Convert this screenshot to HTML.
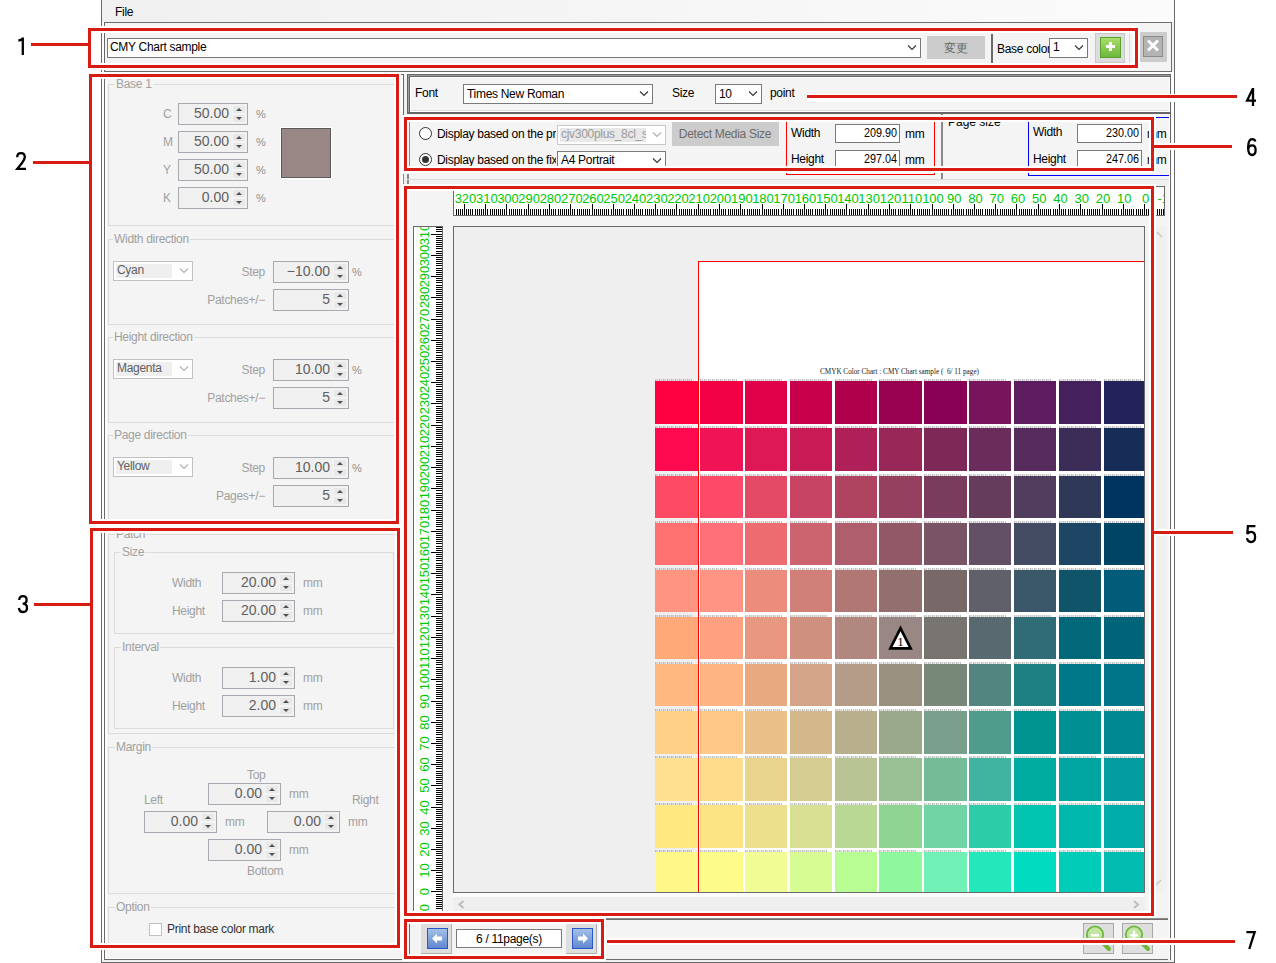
<!DOCTYPE html><html><head><meta charset="utf-8"><style>
html,body{margin:0;padding:0;}
body{width:1276px;height:963px;position:relative;overflow:hidden;background:#fff;font-family:"Liberation Sans", sans-serif;}
body div{position:absolute;box-sizing:content-box;}
</style></head><body>
<div style="left:101px;top:0px;width:1074px;height:963px;background:#f0f0f0"></div>
<div style="left:102px;top:0;width:1072px;height:22px;background:linear-gradient(90deg,#f0f0f0,#fbfbfb);"></div>
<div style="left:115px;top:6.43px;font-size:12px;line-height:12px;color:#000;white-space:nowrap;letter-spacing:-0.3px;">File</div>
<div style="left:101px;top:0px;width:1px;height:963px;background:#6a6a6a"></div>
<div style="left:1174px;top:0px;width:1px;height:963px;background:#6a6a6a"></div>
<div style="left:101px;top:962px;width:1074px;height:1px;background:#6a6a6a"></div>
<div style="left:104px;top:22px;width:1066px;height:48px;border:1px solid #6e6e6e;background:#f4f4f4;"></div>
<div style="left:104px;top:22px;width:1px;height:938px;background:#6a6a6a"></div>
<div style="left:102px;top:22px;width:2px;height:938px;background:#fdfdfd"></div>
<div style="left:105px;top:72px;width:298px;height:887px;background:#fdfdfd"></div>
<div style="left:107px;top:74px;width:294px;height:884px;background:#f4f4f4"></div>
<div style="left:104px;top:959px;width:300px;height:1px;background:#6a6a6a"></div>
<div style="left:108px;top:84px;width:285px;height:140px;border:1px solid #dcdcdc;"></div>
<div style="left:115px;top:77px;padding:0 1px;background:#f4f4f4;font-size:12px;line-height:14px;letter-spacing:-0.3px;color:#a0a0a0;white-space:nowrap;">Base 1</div>
<div style="left:163px;top:108.43px;font-size:12px;line-height:12px;color:#a0a0a0;white-space:nowrap;letter-spacing:-0.3px;">C</div>
<div style="left:178px;top:103px;width:68px;height:20px;border:1px solid #a8a8b0;background:#f0f0f0;"></div>
<div style="left:232px;top:105px;width:12px;height:7px;background:#e8e8e8;border:1px solid #f4f4f4;"></div>
<div style="left:232px;top:114px;width:12px;height:7px;background:#e8e8e8;border:1px solid #f4f4f4;"></div>
<div style="left:236px;top:108px;width:0;height:0;border-left:3px solid transparent;border-right:3px solid transparent;border-bottom:3px solid #505050;"></div>
<div style="left:236px;top:117px;width:0;height:0;border-left:3px solid transparent;border-right:3px solid transparent;border-top:3px solid #505050;"></div>
<div style="left:169px;width:60px;text-align:right;top:106.17px;font-size:14px;line-height:14px;color:#606060;white-space:nowrap;letter-spacing:0px;">50.00</div>
<div style="left:256px;top:108.56px;font-size:11px;line-height:11px;color:#909090;white-space:nowrap;letter-spacing:0px;">%</div>
<div style="left:163px;top:136.43px;font-size:12px;line-height:12px;color:#a0a0a0;white-space:nowrap;letter-spacing:-0.3px;">M</div>
<div style="left:178px;top:131px;width:68px;height:20px;border:1px solid #a8a8b0;background:#f0f0f0;"></div>
<div style="left:232px;top:133px;width:12px;height:7px;background:#e8e8e8;border:1px solid #f4f4f4;"></div>
<div style="left:232px;top:142px;width:12px;height:7px;background:#e8e8e8;border:1px solid #f4f4f4;"></div>
<div style="left:236px;top:136px;width:0;height:0;border-left:3px solid transparent;border-right:3px solid transparent;border-bottom:3px solid #505050;"></div>
<div style="left:236px;top:145px;width:0;height:0;border-left:3px solid transparent;border-right:3px solid transparent;border-top:3px solid #505050;"></div>
<div style="left:169px;width:60px;text-align:right;top:134.17px;font-size:14px;line-height:14px;color:#606060;white-space:nowrap;letter-spacing:0px;">50.00</div>
<div style="left:256px;top:136.56px;font-size:11px;line-height:11px;color:#909090;white-space:nowrap;letter-spacing:0px;">%</div>
<div style="left:163px;top:164.43px;font-size:12px;line-height:12px;color:#a0a0a0;white-space:nowrap;letter-spacing:-0.3px;">Y</div>
<div style="left:178px;top:159px;width:68px;height:20px;border:1px solid #a8a8b0;background:#f0f0f0;"></div>
<div style="left:232px;top:161px;width:12px;height:7px;background:#e8e8e8;border:1px solid #f4f4f4;"></div>
<div style="left:232px;top:170px;width:12px;height:7px;background:#e8e8e8;border:1px solid #f4f4f4;"></div>
<div style="left:236px;top:164px;width:0;height:0;border-left:3px solid transparent;border-right:3px solid transparent;border-bottom:3px solid #505050;"></div>
<div style="left:236px;top:173px;width:0;height:0;border-left:3px solid transparent;border-right:3px solid transparent;border-top:3px solid #505050;"></div>
<div style="left:169px;width:60px;text-align:right;top:162.17px;font-size:14px;line-height:14px;color:#606060;white-space:nowrap;letter-spacing:0px;">50.00</div>
<div style="left:256px;top:164.56px;font-size:11px;line-height:11px;color:#909090;white-space:nowrap;letter-spacing:0px;">%</div>
<div style="left:163px;top:192.43px;font-size:12px;line-height:12px;color:#a0a0a0;white-space:nowrap;letter-spacing:-0.3px;">K</div>
<div style="left:178px;top:187px;width:68px;height:20px;border:1px solid #a8a8b0;background:#f0f0f0;"></div>
<div style="left:232px;top:189px;width:12px;height:7px;background:#e8e8e8;border:1px solid #f4f4f4;"></div>
<div style="left:232px;top:198px;width:12px;height:7px;background:#e8e8e8;border:1px solid #f4f4f4;"></div>
<div style="left:236px;top:192px;width:0;height:0;border-left:3px solid transparent;border-right:3px solid transparent;border-bottom:3px solid #505050;"></div>
<div style="left:236px;top:201px;width:0;height:0;border-left:3px solid transparent;border-right:3px solid transparent;border-top:3px solid #505050;"></div>
<div style="left:169px;width:60px;text-align:right;top:190.17px;font-size:14px;line-height:14px;color:#606060;white-space:nowrap;letter-spacing:0px;">0.00</div>
<div style="left:256px;top:192.56px;font-size:11px;line-height:11px;color:#909090;white-space:nowrap;letter-spacing:0px;">%</div>
<div style="left:281px;top:128px;width:48px;height:48px;border:1px solid #5a5a5a;background:#988784;box-shadow:0 0 0 1px #fff;"></div>
<div style="left:108px;top:239px;width:285px;height:84px;border:1px solid #dcdcdc;"></div>
<div style="left:113px;top:232px;padding:0 1px;background:#f4f4f4;font-size:12px;line-height:14px;letter-spacing:-0.3px;color:#a0a0a0;white-space:nowrap;">Width direction</div>
<div style="left:113px;top:261px;width:78px;height:18px;border:1px solid #c0c0c0;background:#fff;"></div>
<div style="left:116px;top:264px;width:56px;height:14px;background:#efefef"></div>
<div style="left:117px;top:264.43px;font-size:12px;line-height:12px;color:#606060;white-space:nowrap;letter-spacing:-0.3px;">Cyan</div>
<svg style="position:absolute;left:179px;top:268.0px" width="10" height="6" viewBox="0 0 10 6"><path d="M1 0.5 L5 4.5 L9 0.5" fill="none" stroke="#b0b0b0" stroke-width="1.1"/></svg>
<div style="left:205px;width:60px;text-align:right;top:266.43px;font-size:12px;line-height:12px;color:#a0a0a0;white-space:nowrap;letter-spacing:-0.3px;">Step</div>
<div style="left:273px;top:261px;width:74px;height:20px;border:1px solid #a8a8b0;background:#f0f0f0;"></div>
<div style="left:333px;top:263px;width:12px;height:7px;background:#e8e8e8;border:1px solid #f4f4f4;"></div>
<div style="left:333px;top:272px;width:12px;height:7px;background:#e8e8e8;border:1px solid #f4f4f4;"></div>
<div style="left:337px;top:266px;width:0;height:0;border-left:3px solid transparent;border-right:3px solid transparent;border-bottom:3px solid #505050;"></div>
<div style="left:337px;top:275px;width:0;height:0;border-left:3px solid transparent;border-right:3px solid transparent;border-top:3px solid #505050;"></div>
<div style="left:270px;width:60px;text-align:right;top:264.17px;font-size:14px;line-height:14px;color:#606060;white-space:nowrap;letter-spacing:0px;">&minus;10.00</div>
<div style="left:352px;top:266.56px;font-size:11px;line-height:11px;color:#909090;white-space:nowrap;letter-spacing:0px;">%</div>
<div style="left:185px;width:80px;text-align:right;top:294.43px;font-size:12px;line-height:12px;color:#a0a0a0;white-space:nowrap;letter-spacing:-0.3px;">Patches+/&minus;</div>
<div style="left:273px;top:289px;width:74px;height:20px;border:1px solid #a8a8b0;background:#f0f0f0;"></div>
<div style="left:333px;top:291px;width:12px;height:7px;background:#e8e8e8;border:1px solid #f4f4f4;"></div>
<div style="left:333px;top:300px;width:12px;height:7px;background:#e8e8e8;border:1px solid #f4f4f4;"></div>
<div style="left:337px;top:294px;width:0;height:0;border-left:3px solid transparent;border-right:3px solid transparent;border-bottom:3px solid #505050;"></div>
<div style="left:337px;top:303px;width:0;height:0;border-left:3px solid transparent;border-right:3px solid transparent;border-top:3px solid #505050;"></div>
<div style="left:270px;width:60px;text-align:right;top:292.17px;font-size:14px;line-height:14px;color:#606060;white-space:nowrap;letter-spacing:0px;">5</div>
<div style="left:108px;top:337px;width:285px;height:84px;border:1px solid #dcdcdc;"></div>
<div style="left:113px;top:330px;padding:0 1px;background:#f4f4f4;font-size:12px;line-height:14px;letter-spacing:-0.3px;color:#a0a0a0;white-space:nowrap;">Height direction</div>
<div style="left:113px;top:359px;width:78px;height:18px;border:1px solid #c0c0c0;background:#fff;"></div>
<div style="left:116px;top:362px;width:56px;height:14px;background:#efefef"></div>
<div style="left:117px;top:362.43px;font-size:12px;line-height:12px;color:#606060;white-space:nowrap;letter-spacing:-0.3px;">Magenta</div>
<svg style="position:absolute;left:179px;top:366.0px" width="10" height="6" viewBox="0 0 10 6"><path d="M1 0.5 L5 4.5 L9 0.5" fill="none" stroke="#b0b0b0" stroke-width="1.1"/></svg>
<div style="left:205px;width:60px;text-align:right;top:364.43px;font-size:12px;line-height:12px;color:#a0a0a0;white-space:nowrap;letter-spacing:-0.3px;">Step</div>
<div style="left:273px;top:359px;width:74px;height:20px;border:1px solid #a8a8b0;background:#f0f0f0;"></div>
<div style="left:333px;top:361px;width:12px;height:7px;background:#e8e8e8;border:1px solid #f4f4f4;"></div>
<div style="left:333px;top:370px;width:12px;height:7px;background:#e8e8e8;border:1px solid #f4f4f4;"></div>
<div style="left:337px;top:364px;width:0;height:0;border-left:3px solid transparent;border-right:3px solid transparent;border-bottom:3px solid #505050;"></div>
<div style="left:337px;top:373px;width:0;height:0;border-left:3px solid transparent;border-right:3px solid transparent;border-top:3px solid #505050;"></div>
<div style="left:270px;width:60px;text-align:right;top:362.17px;font-size:14px;line-height:14px;color:#606060;white-space:nowrap;letter-spacing:0px;">10.00</div>
<div style="left:352px;top:364.56px;font-size:11px;line-height:11px;color:#909090;white-space:nowrap;letter-spacing:0px;">%</div>
<div style="left:185px;width:80px;text-align:right;top:392.43px;font-size:12px;line-height:12px;color:#a0a0a0;white-space:nowrap;letter-spacing:-0.3px;">Patches+/&minus;</div>
<div style="left:273px;top:387px;width:74px;height:20px;border:1px solid #a8a8b0;background:#f0f0f0;"></div>
<div style="left:333px;top:389px;width:12px;height:7px;background:#e8e8e8;border:1px solid #f4f4f4;"></div>
<div style="left:333px;top:398px;width:12px;height:7px;background:#e8e8e8;border:1px solid #f4f4f4;"></div>
<div style="left:337px;top:392px;width:0;height:0;border-left:3px solid transparent;border-right:3px solid transparent;border-bottom:3px solid #505050;"></div>
<div style="left:337px;top:401px;width:0;height:0;border-left:3px solid transparent;border-right:3px solid transparent;border-top:3px solid #505050;"></div>
<div style="left:270px;width:60px;text-align:right;top:390.17px;font-size:14px;line-height:14px;color:#606060;white-space:nowrap;letter-spacing:0px;">5</div>
<div style="left:108px;top:435px;width:285px;height:84px;border:1px solid #dcdcdc;"></div>
<div style="left:113px;top:428px;padding:0 1px;background:#f4f4f4;font-size:12px;line-height:14px;letter-spacing:-0.3px;color:#a0a0a0;white-space:nowrap;">Page direction</div>
<div style="left:113px;top:457px;width:78px;height:18px;border:1px solid #c0c0c0;background:#fff;"></div>
<div style="left:116px;top:460px;width:56px;height:14px;background:#efefef"></div>
<div style="left:117px;top:460.43px;font-size:12px;line-height:12px;color:#606060;white-space:nowrap;letter-spacing:-0.3px;">Yellow</div>
<svg style="position:absolute;left:179px;top:464.0px" width="10" height="6" viewBox="0 0 10 6"><path d="M1 0.5 L5 4.5 L9 0.5" fill="none" stroke="#b0b0b0" stroke-width="1.1"/></svg>
<div style="left:205px;width:60px;text-align:right;top:462.43px;font-size:12px;line-height:12px;color:#a0a0a0;white-space:nowrap;letter-spacing:-0.3px;">Step</div>
<div style="left:273px;top:457px;width:74px;height:20px;border:1px solid #a8a8b0;background:#f0f0f0;"></div>
<div style="left:333px;top:459px;width:12px;height:7px;background:#e8e8e8;border:1px solid #f4f4f4;"></div>
<div style="left:333px;top:468px;width:12px;height:7px;background:#e8e8e8;border:1px solid #f4f4f4;"></div>
<div style="left:337px;top:462px;width:0;height:0;border-left:3px solid transparent;border-right:3px solid transparent;border-bottom:3px solid #505050;"></div>
<div style="left:337px;top:471px;width:0;height:0;border-left:3px solid transparent;border-right:3px solid transparent;border-top:3px solid #505050;"></div>
<div style="left:270px;width:60px;text-align:right;top:460.17px;font-size:14px;line-height:14px;color:#606060;white-space:nowrap;letter-spacing:0px;">10.00</div>
<div style="left:352px;top:462.56px;font-size:11px;line-height:11px;color:#909090;white-space:nowrap;letter-spacing:0px;">%</div>
<div style="left:185px;width:80px;text-align:right;top:490.43px;font-size:12px;line-height:12px;color:#a0a0a0;white-space:nowrap;letter-spacing:-0.3px;">Pages+/&minus;</div>
<div style="left:273px;top:485px;width:74px;height:20px;border:1px solid #a8a8b0;background:#f0f0f0;"></div>
<div style="left:333px;top:487px;width:12px;height:7px;background:#e8e8e8;border:1px solid #f4f4f4;"></div>
<div style="left:333px;top:496px;width:12px;height:7px;background:#e8e8e8;border:1px solid #f4f4f4;"></div>
<div style="left:337px;top:490px;width:0;height:0;border-left:3px solid transparent;border-right:3px solid transparent;border-bottom:3px solid #505050;"></div>
<div style="left:337px;top:499px;width:0;height:0;border-left:3px solid transparent;border-right:3px solid transparent;border-top:3px solid #505050;"></div>
<div style="left:270px;width:60px;text-align:right;top:488.17px;font-size:14px;line-height:14px;color:#606060;white-space:nowrap;letter-spacing:0px;">5</div>
<div style="left:108px;top:534px;width:286px;height:198px;border:1px solid #dcdcdc;"></div>
<div style="left:115px;top:527px;padding:0 1px;background:#f4f4f4;font-size:12px;line-height:14px;letter-spacing:-0.3px;color:#a0a0a0;white-space:nowrap;">Patch</div>
<div style="left:114px;top:552px;width:278px;height:80px;border:1px solid #dcdcdc;"></div>
<div style="left:121px;top:545px;padding:0 1px;background:#f4f4f4;font-size:12px;line-height:14px;letter-spacing:-0.3px;color:#a0a0a0;white-space:nowrap;">Size</div>
<div style="left:172px;top:577.43px;font-size:12px;line-height:12px;color:#a0a0a0;white-space:nowrap;letter-spacing:-0.3px;">Width</div>
<div style="left:222px;top:572px;width:71px;height:20px;border:1px solid #a8a8b0;background:#f0f0f0;"></div>
<div style="left:279px;top:574px;width:12px;height:7px;background:#e8e8e8;border:1px solid #f4f4f4;"></div>
<div style="left:279px;top:583px;width:12px;height:7px;background:#e8e8e8;border:1px solid #f4f4f4;"></div>
<div style="left:283px;top:577px;width:0;height:0;border-left:3px solid transparent;border-right:3px solid transparent;border-bottom:3px solid #505050;"></div>
<div style="left:283px;top:586px;width:0;height:0;border-left:3px solid transparent;border-right:3px solid transparent;border-top:3px solid #505050;"></div>
<div style="left:216px;width:60px;text-align:right;top:575.17px;font-size:14px;line-height:14px;color:#606060;white-space:nowrap;letter-spacing:0px;">20.00</div>
<div style="left:303px;top:577.43px;font-size:12px;line-height:12px;color:#a0a0a0;white-space:nowrap;letter-spacing:-0.3px;">mm</div>
<div style="left:172px;top:605.43px;font-size:12px;line-height:12px;color:#a0a0a0;white-space:nowrap;letter-spacing:-0.3px;">Height</div>
<div style="left:222px;top:600px;width:71px;height:20px;border:1px solid #a8a8b0;background:#f0f0f0;"></div>
<div style="left:279px;top:602px;width:12px;height:7px;background:#e8e8e8;border:1px solid #f4f4f4;"></div>
<div style="left:279px;top:611px;width:12px;height:7px;background:#e8e8e8;border:1px solid #f4f4f4;"></div>
<div style="left:283px;top:605px;width:0;height:0;border-left:3px solid transparent;border-right:3px solid transparent;border-bottom:3px solid #505050;"></div>
<div style="left:283px;top:614px;width:0;height:0;border-left:3px solid transparent;border-right:3px solid transparent;border-top:3px solid #505050;"></div>
<div style="left:216px;width:60px;text-align:right;top:603.17px;font-size:14px;line-height:14px;color:#606060;white-space:nowrap;letter-spacing:0px;">20.00</div>
<div style="left:303px;top:605.43px;font-size:12px;line-height:12px;color:#a0a0a0;white-space:nowrap;letter-spacing:-0.3px;">mm</div>
<div style="left:114px;top:647px;width:278px;height:80px;border:1px solid #dcdcdc;"></div>
<div style="left:121px;top:640px;padding:0 1px;background:#f4f4f4;font-size:12px;line-height:14px;letter-spacing:-0.3px;color:#a0a0a0;white-space:nowrap;">Interval</div>
<div style="left:172px;top:672.43px;font-size:12px;line-height:12px;color:#a0a0a0;white-space:nowrap;letter-spacing:-0.3px;">Width</div>
<div style="left:222px;top:667px;width:71px;height:20px;border:1px solid #a8a8b0;background:#f0f0f0;"></div>
<div style="left:279px;top:669px;width:12px;height:7px;background:#e8e8e8;border:1px solid #f4f4f4;"></div>
<div style="left:279px;top:678px;width:12px;height:7px;background:#e8e8e8;border:1px solid #f4f4f4;"></div>
<div style="left:283px;top:672px;width:0;height:0;border-left:3px solid transparent;border-right:3px solid transparent;border-bottom:3px solid #505050;"></div>
<div style="left:283px;top:681px;width:0;height:0;border-left:3px solid transparent;border-right:3px solid transparent;border-top:3px solid #505050;"></div>
<div style="left:216px;width:60px;text-align:right;top:670.17px;font-size:14px;line-height:14px;color:#606060;white-space:nowrap;letter-spacing:0px;">1.00</div>
<div style="left:303px;top:672.43px;font-size:12px;line-height:12px;color:#a0a0a0;white-space:nowrap;letter-spacing:-0.3px;">mm</div>
<div style="left:172px;top:700.43px;font-size:12px;line-height:12px;color:#a0a0a0;white-space:nowrap;letter-spacing:-0.3px;">Height</div>
<div style="left:222px;top:695px;width:71px;height:20px;border:1px solid #a8a8b0;background:#f0f0f0;"></div>
<div style="left:279px;top:697px;width:12px;height:7px;background:#e8e8e8;border:1px solid #f4f4f4;"></div>
<div style="left:279px;top:706px;width:12px;height:7px;background:#e8e8e8;border:1px solid #f4f4f4;"></div>
<div style="left:283px;top:700px;width:0;height:0;border-left:3px solid transparent;border-right:3px solid transparent;border-bottom:3px solid #505050;"></div>
<div style="left:283px;top:709px;width:0;height:0;border-left:3px solid transparent;border-right:3px solid transparent;border-top:3px solid #505050;"></div>
<div style="left:216px;width:60px;text-align:right;top:698.17px;font-size:14px;line-height:14px;color:#606060;white-space:nowrap;letter-spacing:0px;">2.00</div>
<div style="left:303px;top:700.43px;font-size:12px;line-height:12px;color:#a0a0a0;white-space:nowrap;letter-spacing:-0.3px;">mm</div>
<div style="left:108px;top:747px;width:286px;height:145px;border:1px solid #dcdcdc;"></div>
<div style="left:115px;top:740px;padding:0 1px;background:#f4f4f4;font-size:12px;line-height:14px;letter-spacing:-0.3px;color:#a0a0a0;white-space:nowrap;">Margin</div>
<div style="left:247px;top:769.43px;font-size:12px;line-height:12px;color:#a0a0a0;white-space:nowrap;letter-spacing:-0.3px;">Top</div>
<div style="left:208px;top:783px;width:71px;height:20px;border:1px solid #a8a8b0;background:#f0f0f0;"></div>
<div style="left:265px;top:785px;width:12px;height:7px;background:#e8e8e8;border:1px solid #f4f4f4;"></div>
<div style="left:265px;top:794px;width:12px;height:7px;background:#e8e8e8;border:1px solid #f4f4f4;"></div>
<div style="left:269px;top:788px;width:0;height:0;border-left:3px solid transparent;border-right:3px solid transparent;border-bottom:3px solid #505050;"></div>
<div style="left:269px;top:797px;width:0;height:0;border-left:3px solid transparent;border-right:3px solid transparent;border-top:3px solid #505050;"></div>
<div style="left:202px;width:60px;text-align:right;top:786.17px;font-size:14px;line-height:14px;color:#606060;white-space:nowrap;letter-spacing:0px;">0.00</div>
<div style="left:289px;top:788.43px;font-size:12px;line-height:12px;color:#a0a0a0;white-space:nowrap;letter-spacing:-0.3px;">mm</div>
<div style="left:144px;top:794.43px;font-size:12px;line-height:12px;color:#a0a0a0;white-space:nowrap;letter-spacing:-0.3px;">Left</div>
<div style="left:352px;top:794.43px;font-size:12px;line-height:12px;color:#a0a0a0;white-space:nowrap;letter-spacing:-0.3px;">Right</div>
<div style="left:144px;top:811px;width:71px;height:20px;border:1px solid #a8a8b0;background:#f0f0f0;"></div>
<div style="left:201px;top:813px;width:12px;height:7px;background:#e8e8e8;border:1px solid #f4f4f4;"></div>
<div style="left:201px;top:822px;width:12px;height:7px;background:#e8e8e8;border:1px solid #f4f4f4;"></div>
<div style="left:205px;top:816px;width:0;height:0;border-left:3px solid transparent;border-right:3px solid transparent;border-bottom:3px solid #505050;"></div>
<div style="left:205px;top:825px;width:0;height:0;border-left:3px solid transparent;border-right:3px solid transparent;border-top:3px solid #505050;"></div>
<div style="left:138px;width:60px;text-align:right;top:814.17px;font-size:14px;line-height:14px;color:#606060;white-space:nowrap;letter-spacing:0px;">0.00</div>
<div style="left:225px;top:816.43px;font-size:12px;line-height:12px;color:#a0a0a0;white-space:nowrap;letter-spacing:-0.3px;">mm</div>
<div style="left:267px;top:811px;width:71px;height:20px;border:1px solid #a8a8b0;background:#f0f0f0;"></div>
<div style="left:324px;top:813px;width:12px;height:7px;background:#e8e8e8;border:1px solid #f4f4f4;"></div>
<div style="left:324px;top:822px;width:12px;height:7px;background:#e8e8e8;border:1px solid #f4f4f4;"></div>
<div style="left:328px;top:816px;width:0;height:0;border-left:3px solid transparent;border-right:3px solid transparent;border-bottom:3px solid #505050;"></div>
<div style="left:328px;top:825px;width:0;height:0;border-left:3px solid transparent;border-right:3px solid transparent;border-top:3px solid #505050;"></div>
<div style="left:261px;width:60px;text-align:right;top:814.17px;font-size:14px;line-height:14px;color:#606060;white-space:nowrap;letter-spacing:0px;">0.00</div>
<div style="left:348px;top:816.43px;font-size:12px;line-height:12px;color:#a0a0a0;white-space:nowrap;letter-spacing:-0.3px;">mm</div>
<div style="left:208px;top:839px;width:71px;height:20px;border:1px solid #a8a8b0;background:#f0f0f0;"></div>
<div style="left:265px;top:841px;width:12px;height:7px;background:#e8e8e8;border:1px solid #f4f4f4;"></div>
<div style="left:265px;top:850px;width:12px;height:7px;background:#e8e8e8;border:1px solid #f4f4f4;"></div>
<div style="left:269px;top:844px;width:0;height:0;border-left:3px solid transparent;border-right:3px solid transparent;border-bottom:3px solid #505050;"></div>
<div style="left:269px;top:853px;width:0;height:0;border-left:3px solid transparent;border-right:3px solid transparent;border-top:3px solid #505050;"></div>
<div style="left:202px;width:60px;text-align:right;top:842.17px;font-size:14px;line-height:14px;color:#606060;white-space:nowrap;letter-spacing:0px;">0.00</div>
<div style="left:289px;top:844.43px;font-size:12px;line-height:12px;color:#a0a0a0;white-space:nowrap;letter-spacing:-0.3px;">mm</div>
<div style="left:247px;top:865.43px;font-size:12px;line-height:12px;color:#a0a0a0;white-space:nowrap;letter-spacing:-0.3px;">Bottom</div>
<div style="left:108px;top:907px;width:286px;height:38px;border:1px solid #dcdcdc;"></div>
<div style="left:115px;top:900px;padding:0 1px;background:#f4f4f4;font-size:12px;line-height:14px;letter-spacing:-0.3px;color:#a0a0a0;white-space:nowrap;">Option</div>
<div style="left:149px;top:923px;width:11px;height:11px;border:1px solid #c0c0c0;background:#fff;"></div>
<div style="left:167px;top:923.43px;font-size:12px;line-height:12px;color:#333;white-space:nowrap;letter-spacing:-0.3px;">Print base color mark</div>
<div style="left:107px;top:38px;width:812px;height:18px;border:1px solid #7a7a7a;background:#fff;"></div>
<div style="left:110px;top:41.43px;font-size:12px;line-height:12px;color:#000;white-space:nowrap;letter-spacing:-0.3px;">CMY Chart sample</div>
<svg style="position:absolute;left:907px;top:45.0px" width="10" height="6" viewBox="0 0 10 6"><path d="M1 0.5 L5 4.5 L9 0.5" fill="none" stroke="#333" stroke-width="1.1"/></svg>
<div style="left:927px;top:36px;width:58px;height:23px;background:#cccccc;"></div>
<div style="left:927.0px;width:58px;text-align:center;top:41.93px;font-size:12px;line-height:12px;color:#6a6a6a;white-space:nowrap;letter-spacing:0.5px;">変更</div>
<div style="left:991px;top:34px;width:2px;height:29px;background:#6a6a6a"></div>
<div style="left:997px;top:43.43px;font-size:12px;line-height:12px;color:#000;white-space:nowrap;letter-spacing:-0.3px;">Base color</div>
<div style="left:1049px;top:38px;width:37px;height:18px;border:1px solid #7a7a7a;background:#fff;"></div>
<div style="left:1053px;top:41.43px;font-size:12px;line-height:12px;color:#000;white-space:nowrap;letter-spacing:-0.3px;">1</div>
<svg style="position:absolute;left:1074px;top:45.0px" width="10" height="6" viewBox="0 0 10 6"><path d="M1 0.5 L5 4.5 L9 0.5" fill="none" stroke="#333" stroke-width="1.1"/></svg>
<div style="left:1095px;top:33px;width:28px;height:28px;border:1px solid #c8c8c8;background:#dcdcdc;"></div>
<div style="left:1100px;top:37px;width:19px;height:19px;border:1px solid #5aa02c;background:linear-gradient(#a8dc6c,#6cb83c);"></div>
<div style="left:1106px;top:45px;width:9px;height:3px;background:#fff"></div>
<div style="left:1109px;top:42px;width:3px;height:9px;background:#fff"></div>
<div style="left:1129px;top:34px;width:1px;height:28px;background:#d8d8d8"></div>
<div style="left:1140px;top:32px;width:27px;height:30px;background:#cccccc;"></div>
<div style="left:1143px;top:36px;width:18px;height:19px;border:1px solid #8c8c8c;background:#b4b4b4;"></div>
<div style="left:1146px;top:44px;width:14px;height:3px;background:#fff;transform:rotate(45deg);"></div>
<div style="left:1146px;top:44px;width:14px;height:3px;background:#fff;transform:rotate(-45deg);"></div>
<div style="left:403px;top:74px;width:1px;height:41px;background:#666"></div>
<div style="left:407px;top:74px;width:762px;height:37px;border:1px solid #666;border-bottom-width:2px;background:#f4f4f4;box-shadow:inset 1px 1px 0 #a0a0a0, inset 2px 2px 0 #666, inset 3px 3px 0 #fff, inset -1px -1px 0 #fff;"></div>
<div style="left:410px;top:110px;width:759px;height:1px;background:#e0e0e0"></div>
<div style="left:401px;top:74px;width:3px;height:1px;background:#666"></div>
<div style="left:415px;top:87.43px;font-size:12px;line-height:12px;color:#000;white-space:nowrap;letter-spacing:-0.3px;">Font</div>
<div style="left:463px;top:84px;width:188px;height:18px;border:1px solid #7a7a7a;background:#fff;"></div>
<div style="left:467px;top:88.43px;font-size:12px;line-height:12px;color:#000;white-space:nowrap;letter-spacing:-0.3px;">Times New Roman</div>
<svg style="position:absolute;left:639px;top:91.0px" width="10" height="6" viewBox="0 0 10 6"><path d="M1 0.5 L5 4.5 L9 0.5" fill="none" stroke="#333" stroke-width="1.1"/></svg>
<div style="left:672px;top:87.43px;font-size:12px;line-height:12px;color:#000;white-space:nowrap;letter-spacing:-0.3px;">Size</div>
<div style="left:715px;top:84px;width:45px;height:18px;border:1px solid #7a7a7a;background:#fff;"></div>
<div style="left:719px;top:88.43px;font-size:12px;line-height:12px;color:#000;white-space:nowrap;letter-spacing:-0.3px;">10</div>
<svg style="position:absolute;left:748px;top:91.0px" width="10" height="6" viewBox="0 0 10 6"><path d="M1 0.5 L5 4.5 L9 0.5" fill="none" stroke="#333" stroke-width="1.1"/></svg>
<div style="left:770px;top:87.43px;font-size:12px;line-height:12px;color:#000;white-space:nowrap;letter-spacing:-0.3px;">point</div>
<div style="left:407px;top:114px;width:763px;height:66px;background:#f4f4f4"></div>
<div style="left:409px;top:122px;width:1px;height:45px;background:#8a8a8a"></div>
<div style="left:419px;top:127px;width:11px;height:11px;border:1px solid #333;border-radius:50%;background:#fff;"></div>
<div style="left:419px;top:153px;width:11px;height:11px;border:1px solid #333;border-radius:50%;background:#fff;"></div>
<div style="left:422px;top:156px;width:7px;height:7px;border-radius:50%;background:#333;"></div>
<div style="left:437px;top:126px;width:119px;height:16px;overflow:hidden;"><div style="left:0;top:0.4px;font-size:12px;line-height:16px;letter-spacing:-0.3px;white-space:nowrap;color:#000;position:absolute;">Display based on the printer</div></div>
<div style="left:437px;top:152px;width:119px;height:16px;overflow:hidden;"><div style="left:0;top:0.4px;font-size:12px;line-height:16px;letter-spacing:-0.3px;white-space:nowrap;color:#000;position:absolute;">Display based on the fixed size</div></div>
<div style="left:557px;top:125px;width:107px;height:18px;border:1px solid #c8c8c8;background:#fff;"></div>
<div style="left:560px;top:128px;width:86px;height:14px;background:#e8e8e8"></div>
<div style="left:558px;top:126px;width:88px;height:18px;overflow:hidden;"><div style="left:3px;top:2.43px;font-size:12px;line-height:12px;letter-spacing:-0.3px;color:#9a9a9a;white-space:nowrap;">cjv300plus_8cl_ss</div></div>
<svg style="position:absolute;left:652px;top:132.0px" width="10" height="6" viewBox="0 0 10 6"><path d="M1 0.5 L5 4.5 L9 0.5" fill="none" stroke="#b0b0b0" stroke-width="1.1"/></svg>
<div style="left:557px;top:151px;width:107px;height:18px;border:1px solid #7a7a7a;background:#fff;"></div>
<div style="left:561px;top:154.43px;font-size:12px;line-height:12px;color:#000;white-space:nowrap;letter-spacing:-0.3px;">A4 Portrait</div>
<svg style="position:absolute;left:652px;top:158.0px" width="10" height="6" viewBox="0 0 10 6"><path d="M1 0.5 L5 4.5 L9 0.5" fill="none" stroke="#333" stroke-width="1.1"/></svg>
<div style="left:672px;top:122px;width:107px;height:24px;background:#cccccc;"></div>
<div style="left:671.5px;width:107px;text-align:center;top:128.43px;font-size:12px;line-height:12px;color:#6a6a6a;white-space:nowrap;letter-spacing:-0.3px;">Detect Media Size</div>
<div style="left:786px;top:122px;width:147px;height:52px;border:1px solid #ff0000;border-top:0;"></div>
<div style="left:791px;top:127.43px;font-size:12px;line-height:12px;color:#000;white-space:nowrap;letter-spacing:-0.3px;">Width</div>
<div style="left:835px;top:124px;width:63px;height:17px;border:1px solid #7a7a7a;background:#fff;"></div>
<div style="left:837px;width:60px;text-align:right;top:127.43px;font-size:12px;line-height:12px;color:#000;white-space:nowrap;letter-spacing:0px;transform:scaleX(.9);transform-origin:100% 50%;">209.90</div>
<div style="left:905px;top:128.43px;font-size:12px;line-height:12px;color:#000;white-space:nowrap;letter-spacing:-0.3px;">mm</div>
<div style="left:791px;top:153.43px;font-size:12px;line-height:12px;color:#000;white-space:nowrap;letter-spacing:-0.3px;">Height</div>
<div style="left:835px;top:150px;width:63px;height:17px;border:1px solid #7a7a7a;background:#fff;"></div>
<div style="left:837px;width:60px;text-align:right;top:153.43px;font-size:12px;line-height:12px;color:#000;white-space:nowrap;letter-spacing:0px;transform:scaleX(.9);transform-origin:100% 50%;">297.04</div>
<div style="left:905px;top:154.43px;font-size:12px;line-height:12px;color:#000;white-space:nowrap;letter-spacing:-0.3px;">mm</div>
<div style="left:941px;top:114px;width:2px;height:66px;background:#8a8a8a"></div>
<div style="left:948px;top:121px;width:60px;height:10px;overflow:hidden;"><div style="position:absolute;left:0;top:-5px;font-size:12px;line-height:12px;color:#000;">Page size</div></div>
<div style="left:1028px;top:117px;width:142px;height:57px;border:1px solid #0000ff;border-right:0;"></div>
<div style="left:1033px;top:126.43px;font-size:12px;line-height:12px;color:#000;white-space:nowrap;letter-spacing:-0.3px;">Width</div>
<div style="left:1077px;top:124px;width:63px;height:17px;border:1px solid #7a7a7a;background:#fff;"></div>
<div style="left:1079px;width:60px;text-align:right;top:127.43px;font-size:12px;line-height:12px;color:#000;white-space:nowrap;letter-spacing:0px;transform:scaleX(.9);transform-origin:100% 50%;">230.00</div>
<div style="left:1147px;top:128.43px;font-size:12px;line-height:12px;color:#000;white-space:nowrap;letter-spacing:-0.3px;">mm</div>
<div style="left:1033px;top:153.43px;font-size:12px;line-height:12px;color:#000;white-space:nowrap;letter-spacing:-0.3px;">Height</div>
<div style="left:1077px;top:150px;width:63px;height:17px;border:1px solid #7a7a7a;background:#fff;"></div>
<div style="left:1079px;width:60px;text-align:right;top:153.43px;font-size:12px;line-height:12px;color:#000;white-space:nowrap;letter-spacing:0px;transform:scaleX(.9);transform-origin:100% 50%;">247.06</div>
<div style="left:1147px;top:154.43px;font-size:12px;line-height:12px;color:#000;white-space:nowrap;letter-spacing:-0.3px;">mm</div>
<div style="left:403px;top:174px;width:1px;height:10px;background:#8a8a8a"></div>
<div style="left:407px;top:174px;width:2px;height:10px;background:#8a8a8a"></div>
<div style="left:407px;top:179px;width:763px;height:1px;background:#dcdcdc"></div>
<div style="left:407px;top:186px;width:762px;height:730px;background:#f4f4f4"></div>
<div style="left:453px;top:186px;width:710px;height:28px;border-left:1px solid #6a6a6a;border-top:1px solid #6a6a6a;border-right:1px solid #6a6a6a;border-bottom:1px solid #6a6a6a;background:#fff;"></div>
<div style="left:413px;top:226px;width:28px;height:685px;border-left:1px solid #6a6a6a;border-top:1px solid #6a6a6a;border-right:1px solid #6a6a6a;background:#fff;"></div>
<div style="left:453px;top:226px;width:690px;height:665px;border:1px solid #6a6a6a;background:#efefef;overflow:hidden;" id="pg"></div>
<div style="left:453px;top:893px;width:692px;height:4px;background:#fbfbfb"></div>
<div style="left:453px;top:897px;width:692px;height:14px;background:#efefef"></div>
<div style="left:1156px;top:226px;width:10px;height:665px;background:#f0f0f0"></div>
<div style="left:407px;top:919px;width:763px;height:40px;background:#f4f4f4"></div>
<div style="left:606px;top:918px;width:562px;height:1px;background:#8a8a8a"></div>
<div style="left:606px;top:919px;width:562px;height:1px;background:#6e6e6e"></div>
<div style="left:606px;top:959px;width:562px;height:1px;background:#6e6e6e"></div>
<div style="left:409px;top:924px;width:1px;height:30px;background:#6a6a6a"></div>
<div style="left:421px;top:924px;width:30px;height:29px;background:#dedede;border-right:1px solid #b0b0b0;border-bottom:1px solid #b0b0b0;"></div>
<div style="left:427px;top:928px;width:19px;height:19px;border:1px solid #2a58c8;background:linear-gradient(#a4c0e8,#6088d0);"></div>
<svg style="position:absolute;left:427px;top:928px" width="21" height="21" viewBox="0 0 21 21"><path d="M5 10.5 L10 5.5 L10 8.5 L15 8.5 L15 12.5 L10 12.5 L10 15.5 Z" fill="#fff"/></svg>
<div style="left:456px;top:929px;width:104px;height:17px;border:1px solid #7a7a7a;background:#fff;"></div>
<div style="left:457.0px;width:104px;text-align:center;top:933.43px;font-size:12px;line-height:12px;color:#000;white-space:nowrap;letter-spacing:-0.3px;">6 / 11page(s)</div>
<div style="left:566px;top:924px;width:30px;height:29px;background:#dedede;border-right:1px solid #b0b0b0;border-bottom:1px solid #b0b0b0;"></div>
<div style="left:572px;top:928px;width:19px;height:19px;border:1px solid #2a58c8;background:linear-gradient(#a4c0e8,#6088d0);"></div>
<svg style="position:absolute;left:572px;top:928px" width="21" height="21" viewBox="0 0 21 21"><path d="M16 10.5 L11 5.5 L11 8.5 L6 8.5 L6 12.5 L11 12.5 L11 15.5 Z" fill="#fff"/></svg>
<div style="left:1083px;top:923px;width:29px;height:29px;border:1px solid #a8a8a8;background:#dedede;"></div>
<svg style="position:absolute;left:1083px;top:923px" width="31" height="31" viewBox="0 0 31 31"><line x1="19" y1="19" x2="26" y2="26" stroke="#6ab83c" stroke-width="4" stroke-linecap="round"/><circle cx="12" cy="11.6" r="8.2" fill="#c4e4a4" stroke="#6ab83c" stroke-width="1.8"/><rect x="8" y="11" width="8" height="2.4" fill="#fff"/></svg>
<div style="left:1122px;top:923px;width:29px;height:29px;border:1px solid #a8a8a8;background:#dedede;"></div>
<svg style="position:absolute;left:1122px;top:923px" width="31" height="31" viewBox="0 0 31 31"><line x1="19" y1="19" x2="26" y2="26" stroke="#6ab83c" stroke-width="4" stroke-linecap="round"/><circle cx="12" cy="11.6" r="8.2" fill="#c4e4a4" stroke="#6ab83c" stroke-width="1.8"/><rect x="8" y="11" width="8" height="2.4" fill="#fff"/><rect x="10.8" y="7.5" width="2.4" height="9" fill="#fff"/></svg>
<div style="left:1171px;top:72px;width:3px;height:888px;background:#fff"></div>
<div style="left:1169px;top:115px;width:1px;height:844px;background:#fff"></div>
<div style="left:1170px;top:72px;width:1px;height:888px;background:#666"></div>
<div style="left:104px;top:72px;width:1067px;height:1px;background:#fff"></div>
<div style="left:104px;top:73px;width:1067px;height:1px;background:#fff"></div>
<svg style="position:absolute;left:1156px;top:231px" width="8" height="8"><line x1="1" y1="1" x2="6" y2="6" stroke="#c8c8c8" stroke-width="1.5"/></svg>
<svg style="position:absolute;left:1155px;top:879px" width="8" height="8"><line x1="6" y1="1" x2="1" y2="6" stroke="#c8c8c8" stroke-width="1.5"/></svg>
<div style="left:1163px;top:209px;width:1px;height:6px;background:#000"></div><div style="left:1161px;top:209px;width:1px;height:6px;background:#000"></div><div style="left:1159px;top:209px;width:1px;height:6px;background:#000"></div><div style="left:1157px;top:209px;width:1px;height:6px;background:#000"></div><div style="left:1155px;top:209px;width:1px;height:6px;background:#000"></div><div style="left:1152px;top:209px;width:1px;height:6px;background:#000"></div><div style="left:1150px;top:209px;width:1px;height:6px;background:#000"></div><div style="left:1148px;top:209px;width:1px;height:6px;background:#000"></div><div style="left:1146px;top:209px;width:1px;height:6px;background:#000"></div><div style="left:1144px;top:204px;width:1px;height:11px;background:#000"></div><div style="left:1142px;top:209px;width:1px;height:6px;background:#000"></div><div style="left:1140px;top:209px;width:1px;height:6px;background:#000"></div><div style="left:1138px;top:209px;width:1px;height:6px;background:#000"></div><div style="left:1136px;top:209px;width:1px;height:6px;background:#000"></div><div style="left:1133px;top:209px;width:1px;height:6px;background:#000"></div><div style="left:1131px;top:209px;width:1px;height:6px;background:#000"></div><div style="left:1129px;top:209px;width:1px;height:6px;background:#000"></div><div style="left:1127px;top:209px;width:1px;height:6px;background:#000"></div><div style="left:1125px;top:209px;width:1px;height:6px;background:#000"></div><div style="left:1123px;top:204px;width:1px;height:11px;background:#000"></div><div style="left:1121px;top:209px;width:1px;height:6px;background:#000"></div><div style="left:1118px;top:209px;width:1px;height:6px;background:#000"></div><div style="left:1116px;top:209px;width:1px;height:6px;background:#000"></div><div style="left:1114px;top:209px;width:1px;height:6px;background:#000"></div><div style="left:1112px;top:209px;width:1px;height:6px;background:#000"></div><div style="left:1110px;top:209px;width:1px;height:6px;background:#000"></div><div style="left:1108px;top:209px;width:1px;height:6px;background:#000"></div><div style="left:1106px;top:209px;width:1px;height:6px;background:#000"></div><div style="left:1104px;top:209px;width:1px;height:6px;background:#000"></div><div style="left:1102px;top:204px;width:1px;height:11px;background:#000"></div><div style="left:1099px;top:209px;width:1px;height:6px;background:#000"></div><div style="left:1097px;top:209px;width:1px;height:6px;background:#000"></div><div style="left:1095px;top:209px;width:1px;height:6px;background:#000"></div><div style="left:1093px;top:209px;width:1px;height:6px;background:#000"></div><div style="left:1091px;top:209px;width:1px;height:6px;background:#000"></div><div style="left:1089px;top:209px;width:1px;height:6px;background:#000"></div><div style="left:1087px;top:209px;width:1px;height:6px;background:#000"></div><div style="left:1084px;top:209px;width:1px;height:6px;background:#000"></div><div style="left:1082px;top:209px;width:1px;height:6px;background:#000"></div><div style="left:1080px;top:204px;width:1px;height:11px;background:#000"></div><div style="left:1078px;top:209px;width:1px;height:6px;background:#000"></div><div style="left:1076px;top:209px;width:1px;height:6px;background:#000"></div><div style="left:1074px;top:209px;width:1px;height:6px;background:#000"></div><div style="left:1072px;top:209px;width:1px;height:6px;background:#000"></div><div style="left:1070px;top:209px;width:1px;height:6px;background:#000"></div><div style="left:1068px;top:209px;width:1px;height:6px;background:#000"></div><div style="left:1065px;top:209px;width:1px;height:6px;background:#000"></div><div style="left:1063px;top:209px;width:1px;height:6px;background:#000"></div><div style="left:1061px;top:209px;width:1px;height:6px;background:#000"></div><div style="left:1059px;top:204px;width:1px;height:11px;background:#000"></div><div style="left:1057px;top:209px;width:1px;height:6px;background:#000"></div><div style="left:1055px;top:209px;width:1px;height:6px;background:#000"></div><div style="left:1053px;top:209px;width:1px;height:6px;background:#000"></div><div style="left:1050px;top:209px;width:1px;height:6px;background:#000"></div><div style="left:1048px;top:209px;width:1px;height:6px;background:#000"></div><div style="left:1046px;top:209px;width:1px;height:6px;background:#000"></div><div style="left:1044px;top:209px;width:1px;height:6px;background:#000"></div><div style="left:1042px;top:209px;width:1px;height:6px;background:#000"></div><div style="left:1040px;top:209px;width:1px;height:6px;background:#000"></div><div style="left:1038px;top:204px;width:1px;height:11px;background:#000"></div><div style="left:1036px;top:209px;width:1px;height:6px;background:#000"></div><div style="left:1034px;top:209px;width:1px;height:6px;background:#000"></div><div style="left:1031px;top:209px;width:1px;height:6px;background:#000"></div><div style="left:1029px;top:209px;width:1px;height:6px;background:#000"></div><div style="left:1027px;top:209px;width:1px;height:6px;background:#000"></div><div style="left:1025px;top:209px;width:1px;height:6px;background:#000"></div><div style="left:1023px;top:209px;width:1px;height:6px;background:#000"></div><div style="left:1021px;top:209px;width:1px;height:6px;background:#000"></div><div style="left:1019px;top:209px;width:1px;height:6px;background:#000"></div><div style="left:1016px;top:204px;width:1px;height:11px;background:#000"></div><div style="left:1014px;top:209px;width:1px;height:6px;background:#000"></div><div style="left:1012px;top:209px;width:1px;height:6px;background:#000"></div><div style="left:1010px;top:209px;width:1px;height:6px;background:#000"></div><div style="left:1008px;top:209px;width:1px;height:6px;background:#000"></div><div style="left:1006px;top:209px;width:1px;height:6px;background:#000"></div><div style="left:1004px;top:209px;width:1px;height:6px;background:#000"></div><div style="left:1002px;top:209px;width:1px;height:6px;background:#000"></div><div style="left:1000px;top:209px;width:1px;height:6px;background:#000"></div><div style="left:997px;top:209px;width:1px;height:6px;background:#000"></div><div style="left:995px;top:204px;width:1px;height:11px;background:#000"></div><div style="left:993px;top:209px;width:1px;height:6px;background:#000"></div><div style="left:991px;top:209px;width:1px;height:6px;background:#000"></div><div style="left:989px;top:209px;width:1px;height:6px;background:#000"></div><div style="left:987px;top:209px;width:1px;height:6px;background:#000"></div><div style="left:985px;top:209px;width:1px;height:6px;background:#000"></div><div style="left:982px;top:209px;width:1px;height:6px;background:#000"></div><div style="left:980px;top:209px;width:1px;height:6px;background:#000"></div><div style="left:978px;top:209px;width:1px;height:6px;background:#000"></div><div style="left:976px;top:209px;width:1px;height:6px;background:#000"></div><div style="left:974px;top:204px;width:1px;height:11px;background:#000"></div><div style="left:972px;top:209px;width:1px;height:6px;background:#000"></div><div style="left:970px;top:209px;width:1px;height:6px;background:#000"></div><div style="left:968px;top:209px;width:1px;height:6px;background:#000"></div><div style="left:966px;top:209px;width:1px;height:6px;background:#000"></div><div style="left:963px;top:209px;width:1px;height:6px;background:#000"></div><div style="left:961px;top:209px;width:1px;height:6px;background:#000"></div><div style="left:959px;top:209px;width:1px;height:6px;background:#000"></div><div style="left:957px;top:209px;width:1px;height:6px;background:#000"></div><div style="left:955px;top:209px;width:1px;height:6px;background:#000"></div><div style="left:953px;top:204px;width:1px;height:11px;background:#000"></div><div style="left:951px;top:209px;width:1px;height:6px;background:#000"></div><div style="left:948px;top:209px;width:1px;height:6px;background:#000"></div><div style="left:946px;top:209px;width:1px;height:6px;background:#000"></div><div style="left:944px;top:209px;width:1px;height:6px;background:#000"></div><div style="left:942px;top:209px;width:1px;height:6px;background:#000"></div><div style="left:940px;top:209px;width:1px;height:6px;background:#000"></div><div style="left:938px;top:209px;width:1px;height:6px;background:#000"></div><div style="left:936px;top:209px;width:1px;height:6px;background:#000"></div><div style="left:934px;top:209px;width:1px;height:6px;background:#000"></div><div style="left:932px;top:204px;width:1px;height:11px;background:#000"></div><div style="left:929px;top:209px;width:1px;height:6px;background:#000"></div><div style="left:927px;top:209px;width:1px;height:6px;background:#000"></div><div style="left:925px;top:209px;width:1px;height:6px;background:#000"></div><div style="left:923px;top:209px;width:1px;height:6px;background:#000"></div><div style="left:921px;top:209px;width:1px;height:6px;background:#000"></div><div style="left:919px;top:209px;width:1px;height:6px;background:#000"></div><div style="left:917px;top:209px;width:1px;height:6px;background:#000"></div><div style="left:914px;top:209px;width:1px;height:6px;background:#000"></div><div style="left:912px;top:209px;width:1px;height:6px;background:#000"></div><div style="left:910px;top:204px;width:1px;height:11px;background:#000"></div><div style="left:908px;top:209px;width:1px;height:6px;background:#000"></div><div style="left:906px;top:209px;width:1px;height:6px;background:#000"></div><div style="left:904px;top:209px;width:1px;height:6px;background:#000"></div><div style="left:902px;top:209px;width:1px;height:6px;background:#000"></div><div style="left:900px;top:209px;width:1px;height:6px;background:#000"></div><div style="left:898px;top:209px;width:1px;height:6px;background:#000"></div><div style="left:895px;top:209px;width:1px;height:6px;background:#000"></div><div style="left:893px;top:209px;width:1px;height:6px;background:#000"></div><div style="left:891px;top:209px;width:1px;height:6px;background:#000"></div><div style="left:889px;top:204px;width:1px;height:11px;background:#000"></div><div style="left:887px;top:209px;width:1px;height:6px;background:#000"></div><div style="left:885px;top:209px;width:1px;height:6px;background:#000"></div><div style="left:883px;top:209px;width:1px;height:6px;background:#000"></div><div style="left:880px;top:209px;width:1px;height:6px;background:#000"></div><div style="left:878px;top:209px;width:1px;height:6px;background:#000"></div><div style="left:876px;top:209px;width:1px;height:6px;background:#000"></div><div style="left:874px;top:209px;width:1px;height:6px;background:#000"></div><div style="left:872px;top:209px;width:1px;height:6px;background:#000"></div><div style="left:870px;top:209px;width:1px;height:6px;background:#000"></div><div style="left:868px;top:204px;width:1px;height:11px;background:#000"></div><div style="left:866px;top:209px;width:1px;height:6px;background:#000"></div><div style="left:864px;top:209px;width:1px;height:6px;background:#000"></div><div style="left:861px;top:209px;width:1px;height:6px;background:#000"></div><div style="left:859px;top:209px;width:1px;height:6px;background:#000"></div><div style="left:857px;top:209px;width:1px;height:6px;background:#000"></div><div style="left:855px;top:209px;width:1px;height:6px;background:#000"></div><div style="left:853px;top:209px;width:1px;height:6px;background:#000"></div><div style="left:851px;top:209px;width:1px;height:6px;background:#000"></div><div style="left:849px;top:209px;width:1px;height:6px;background:#000"></div><div style="left:846px;top:204px;width:1px;height:11px;background:#000"></div><div style="left:844px;top:209px;width:1px;height:6px;background:#000"></div><div style="left:842px;top:209px;width:1px;height:6px;background:#000"></div><div style="left:840px;top:209px;width:1px;height:6px;background:#000"></div><div style="left:838px;top:209px;width:1px;height:6px;background:#000"></div><div style="left:836px;top:209px;width:1px;height:6px;background:#000"></div><div style="left:834px;top:209px;width:1px;height:6px;background:#000"></div><div style="left:832px;top:209px;width:1px;height:6px;background:#000"></div><div style="left:830px;top:209px;width:1px;height:6px;background:#000"></div><div style="left:827px;top:209px;width:1px;height:6px;background:#000"></div><div style="left:825px;top:204px;width:1px;height:11px;background:#000"></div><div style="left:823px;top:209px;width:1px;height:6px;background:#000"></div><div style="left:821px;top:209px;width:1px;height:6px;background:#000"></div><div style="left:819px;top:209px;width:1px;height:6px;background:#000"></div><div style="left:817px;top:209px;width:1px;height:6px;background:#000"></div><div style="left:815px;top:209px;width:1px;height:6px;background:#000"></div><div style="left:812px;top:209px;width:1px;height:6px;background:#000"></div><div style="left:810px;top:209px;width:1px;height:6px;background:#000"></div><div style="left:808px;top:209px;width:1px;height:6px;background:#000"></div><div style="left:806px;top:209px;width:1px;height:6px;background:#000"></div><div style="left:804px;top:204px;width:1px;height:11px;background:#000"></div><div style="left:802px;top:209px;width:1px;height:6px;background:#000"></div><div style="left:800px;top:209px;width:1px;height:6px;background:#000"></div><div style="left:798px;top:209px;width:1px;height:6px;background:#000"></div><div style="left:796px;top:209px;width:1px;height:6px;background:#000"></div><div style="left:793px;top:209px;width:1px;height:6px;background:#000"></div><div style="left:791px;top:209px;width:1px;height:6px;background:#000"></div><div style="left:789px;top:209px;width:1px;height:6px;background:#000"></div><div style="left:787px;top:209px;width:1px;height:6px;background:#000"></div><div style="left:785px;top:209px;width:1px;height:6px;background:#000"></div><div style="left:783px;top:204px;width:1px;height:11px;background:#000"></div><div style="left:781px;top:209px;width:1px;height:6px;background:#000"></div><div style="left:778px;top:209px;width:1px;height:6px;background:#000"></div><div style="left:776px;top:209px;width:1px;height:6px;background:#000"></div><div style="left:774px;top:209px;width:1px;height:6px;background:#000"></div><div style="left:772px;top:209px;width:1px;height:6px;background:#000"></div><div style="left:770px;top:209px;width:1px;height:6px;background:#000"></div><div style="left:768px;top:209px;width:1px;height:6px;background:#000"></div><div style="left:766px;top:209px;width:1px;height:6px;background:#000"></div><div style="left:764px;top:209px;width:1px;height:6px;background:#000"></div><div style="left:762px;top:204px;width:1px;height:11px;background:#000"></div><div style="left:759px;top:209px;width:1px;height:6px;background:#000"></div><div style="left:757px;top:209px;width:1px;height:6px;background:#000"></div><div style="left:755px;top:209px;width:1px;height:6px;background:#000"></div><div style="left:753px;top:209px;width:1px;height:6px;background:#000"></div><div style="left:751px;top:209px;width:1px;height:6px;background:#000"></div><div style="left:749px;top:209px;width:1px;height:6px;background:#000"></div><div style="left:747px;top:209px;width:1px;height:6px;background:#000"></div><div style="left:744px;top:209px;width:1px;height:6px;background:#000"></div><div style="left:742px;top:209px;width:1px;height:6px;background:#000"></div><div style="left:740px;top:204px;width:1px;height:11px;background:#000"></div><div style="left:738px;top:209px;width:1px;height:6px;background:#000"></div><div style="left:736px;top:209px;width:1px;height:6px;background:#000"></div><div style="left:734px;top:209px;width:1px;height:6px;background:#000"></div><div style="left:732px;top:209px;width:1px;height:6px;background:#000"></div><div style="left:730px;top:209px;width:1px;height:6px;background:#000"></div><div style="left:728px;top:209px;width:1px;height:6px;background:#000"></div><div style="left:725px;top:209px;width:1px;height:6px;background:#000"></div><div style="left:723px;top:209px;width:1px;height:6px;background:#000"></div><div style="left:721px;top:209px;width:1px;height:6px;background:#000"></div><div style="left:719px;top:204px;width:1px;height:11px;background:#000"></div><div style="left:717px;top:209px;width:1px;height:6px;background:#000"></div><div style="left:715px;top:209px;width:1px;height:6px;background:#000"></div><div style="left:713px;top:209px;width:1px;height:6px;background:#000"></div><div style="left:710px;top:209px;width:1px;height:6px;background:#000"></div><div style="left:708px;top:209px;width:1px;height:6px;background:#000"></div><div style="left:706px;top:209px;width:1px;height:6px;background:#000"></div><div style="left:704px;top:209px;width:1px;height:6px;background:#000"></div><div style="left:702px;top:209px;width:1px;height:6px;background:#000"></div><div style="left:700px;top:209px;width:1px;height:6px;background:#000"></div><div style="left:698px;top:204px;width:1px;height:11px;background:#000"></div><div style="left:696px;top:209px;width:1px;height:6px;background:#000"></div><div style="left:694px;top:209px;width:1px;height:6px;background:#000"></div><div style="left:691px;top:209px;width:1px;height:6px;background:#000"></div><div style="left:689px;top:209px;width:1px;height:6px;background:#000"></div><div style="left:687px;top:209px;width:1px;height:6px;background:#000"></div><div style="left:685px;top:209px;width:1px;height:6px;background:#000"></div><div style="left:683px;top:209px;width:1px;height:6px;background:#000"></div><div style="left:681px;top:209px;width:1px;height:6px;background:#000"></div><div style="left:679px;top:209px;width:1px;height:6px;background:#000"></div><div style="left:676px;top:204px;width:1px;height:11px;background:#000"></div><div style="left:674px;top:209px;width:1px;height:6px;background:#000"></div><div style="left:672px;top:209px;width:1px;height:6px;background:#000"></div><div style="left:670px;top:209px;width:1px;height:6px;background:#000"></div><div style="left:668px;top:209px;width:1px;height:6px;background:#000"></div><div style="left:666px;top:209px;width:1px;height:6px;background:#000"></div><div style="left:664px;top:209px;width:1px;height:6px;background:#000"></div><div style="left:662px;top:209px;width:1px;height:6px;background:#000"></div><div style="left:660px;top:209px;width:1px;height:6px;background:#000"></div><div style="left:657px;top:209px;width:1px;height:6px;background:#000"></div><div style="left:655px;top:204px;width:1px;height:11px;background:#000"></div><div style="left:653px;top:209px;width:1px;height:6px;background:#000"></div><div style="left:651px;top:209px;width:1px;height:6px;background:#000"></div><div style="left:649px;top:209px;width:1px;height:6px;background:#000"></div><div style="left:647px;top:209px;width:1px;height:6px;background:#000"></div><div style="left:645px;top:209px;width:1px;height:6px;background:#000"></div><div style="left:642px;top:209px;width:1px;height:6px;background:#000"></div><div style="left:640px;top:209px;width:1px;height:6px;background:#000"></div><div style="left:638px;top:209px;width:1px;height:6px;background:#000"></div><div style="left:636px;top:209px;width:1px;height:6px;background:#000"></div><div style="left:634px;top:204px;width:1px;height:11px;background:#000"></div><div style="left:632px;top:209px;width:1px;height:6px;background:#000"></div><div style="left:630px;top:209px;width:1px;height:6px;background:#000"></div><div style="left:628px;top:209px;width:1px;height:6px;background:#000"></div><div style="left:626px;top:209px;width:1px;height:6px;background:#000"></div><div style="left:623px;top:209px;width:1px;height:6px;background:#000"></div><div style="left:621px;top:209px;width:1px;height:6px;background:#000"></div><div style="left:619px;top:209px;width:1px;height:6px;background:#000"></div><div style="left:617px;top:209px;width:1px;height:6px;background:#000"></div><div style="left:615px;top:209px;width:1px;height:6px;background:#000"></div><div style="left:613px;top:204px;width:1px;height:11px;background:#000"></div><div style="left:611px;top:209px;width:1px;height:6px;background:#000"></div><div style="left:608px;top:209px;width:1px;height:6px;background:#000"></div><div style="left:606px;top:209px;width:1px;height:6px;background:#000"></div><div style="left:604px;top:209px;width:1px;height:6px;background:#000"></div><div style="left:602px;top:209px;width:1px;height:6px;background:#000"></div><div style="left:600px;top:209px;width:1px;height:6px;background:#000"></div><div style="left:598px;top:209px;width:1px;height:6px;background:#000"></div><div style="left:596px;top:209px;width:1px;height:6px;background:#000"></div><div style="left:594px;top:209px;width:1px;height:6px;background:#000"></div><div style="left:592px;top:204px;width:1px;height:11px;background:#000"></div><div style="left:589px;top:209px;width:1px;height:6px;background:#000"></div><div style="left:587px;top:209px;width:1px;height:6px;background:#000"></div><div style="left:585px;top:209px;width:1px;height:6px;background:#000"></div><div style="left:583px;top:209px;width:1px;height:6px;background:#000"></div><div style="left:581px;top:209px;width:1px;height:6px;background:#000"></div><div style="left:579px;top:209px;width:1px;height:6px;background:#000"></div><div style="left:577px;top:209px;width:1px;height:6px;background:#000"></div><div style="left:574px;top:209px;width:1px;height:6px;background:#000"></div><div style="left:572px;top:209px;width:1px;height:6px;background:#000"></div><div style="left:570px;top:204px;width:1px;height:11px;background:#000"></div><div style="left:568px;top:209px;width:1px;height:6px;background:#000"></div><div style="left:566px;top:209px;width:1px;height:6px;background:#000"></div><div style="left:564px;top:209px;width:1px;height:6px;background:#000"></div><div style="left:562px;top:209px;width:1px;height:6px;background:#000"></div><div style="left:560px;top:209px;width:1px;height:6px;background:#000"></div><div style="left:558px;top:209px;width:1px;height:6px;background:#000"></div><div style="left:555px;top:209px;width:1px;height:6px;background:#000"></div><div style="left:553px;top:209px;width:1px;height:6px;background:#000"></div><div style="left:551px;top:209px;width:1px;height:6px;background:#000"></div><div style="left:549px;top:204px;width:1px;height:11px;background:#000"></div><div style="left:547px;top:209px;width:1px;height:6px;background:#000"></div><div style="left:545px;top:209px;width:1px;height:6px;background:#000"></div><div style="left:543px;top:209px;width:1px;height:6px;background:#000"></div><div style="left:540px;top:209px;width:1px;height:6px;background:#000"></div><div style="left:538px;top:209px;width:1px;height:6px;background:#000"></div><div style="left:536px;top:209px;width:1px;height:6px;background:#000"></div><div style="left:534px;top:209px;width:1px;height:6px;background:#000"></div><div style="left:532px;top:209px;width:1px;height:6px;background:#000"></div><div style="left:530px;top:209px;width:1px;height:6px;background:#000"></div><div style="left:528px;top:204px;width:1px;height:11px;background:#000"></div><div style="left:526px;top:209px;width:1px;height:6px;background:#000"></div><div style="left:524px;top:209px;width:1px;height:6px;background:#000"></div><div style="left:521px;top:209px;width:1px;height:6px;background:#000"></div><div style="left:519px;top:209px;width:1px;height:6px;background:#000"></div><div style="left:517px;top:209px;width:1px;height:6px;background:#000"></div><div style="left:515px;top:209px;width:1px;height:6px;background:#000"></div><div style="left:513px;top:209px;width:1px;height:6px;background:#000"></div><div style="left:511px;top:209px;width:1px;height:6px;background:#000"></div><div style="left:509px;top:209px;width:1px;height:6px;background:#000"></div><div style="left:506px;top:204px;width:1px;height:11px;background:#000"></div><div style="left:504px;top:209px;width:1px;height:6px;background:#000"></div><div style="left:502px;top:209px;width:1px;height:6px;background:#000"></div><div style="left:500px;top:209px;width:1px;height:6px;background:#000"></div><div style="left:498px;top:209px;width:1px;height:6px;background:#000"></div><div style="left:496px;top:209px;width:1px;height:6px;background:#000"></div><div style="left:494px;top:209px;width:1px;height:6px;background:#000"></div><div style="left:492px;top:209px;width:1px;height:6px;background:#000"></div><div style="left:490px;top:209px;width:1px;height:6px;background:#000"></div><div style="left:487px;top:209px;width:1px;height:6px;background:#000"></div><div style="left:485px;top:204px;width:1px;height:11px;background:#000"></div><div style="left:483px;top:209px;width:1px;height:6px;background:#000"></div><div style="left:481px;top:209px;width:1px;height:6px;background:#000"></div><div style="left:479px;top:209px;width:1px;height:6px;background:#000"></div><div style="left:477px;top:209px;width:1px;height:6px;background:#000"></div><div style="left:475px;top:209px;width:1px;height:6px;background:#000"></div><div style="left:472px;top:209px;width:1px;height:6px;background:#000"></div><div style="left:470px;top:209px;width:1px;height:6px;background:#000"></div><div style="left:468px;top:209px;width:1px;height:6px;background:#000"></div><div style="left:466px;top:209px;width:1px;height:6px;background:#000"></div><div style="left:464px;top:204px;width:1px;height:11px;background:#000"></div><div style="left:462px;top:209px;width:1px;height:6px;background:#000"></div><div style="left:460px;top:209px;width:1px;height:6px;background:#000"></div><div style="left:458px;top:209px;width:1px;height:6px;background:#000"></div><div style="left:456px;top:209px;width:1px;height:6px;background:#000"></div>
<div style="left:454px;top:187px;width:710px;height:28px;overflow:hidden;"><div style="left:682.8px;top:5.30px;width:60px;text-align:center;font-size:13px;line-height:13px;color:#00c800;">-10</div><div style="left:661.5px;top:5.30px;width:60px;text-align:center;font-size:13px;line-height:13px;color:#00c800;">0</div><div style="left:640.2px;top:5.30px;width:60px;text-align:center;font-size:13px;line-height:13px;color:#00c800;">10</div><div style="left:619.0px;top:5.30px;width:60px;text-align:center;font-size:13px;line-height:13px;color:#00c800;">20</div><div style="left:597.8px;top:5.30px;width:60px;text-align:center;font-size:13px;line-height:13px;color:#00c800;">30</div><div style="left:576.5px;top:5.30px;width:60px;text-align:center;font-size:13px;line-height:13px;color:#00c800;">40</div><div style="left:555.2px;top:5.30px;width:60px;text-align:center;font-size:13px;line-height:13px;color:#00c800;">50</div><div style="left:534.0px;top:5.30px;width:60px;text-align:center;font-size:13px;line-height:13px;color:#00c800;">60</div><div style="left:512.8px;top:5.30px;width:60px;text-align:center;font-size:13px;line-height:13px;color:#00c800;">70</div><div style="left:491.5px;top:5.30px;width:60px;text-align:center;font-size:13px;line-height:13px;color:#00c800;">80</div><div style="left:470.2px;top:5.30px;width:60px;text-align:center;font-size:13px;line-height:13px;color:#00c800;">90</div><div style="left:449.0px;top:5.30px;width:60px;text-align:center;font-size:13px;line-height:13px;color:#00c800;">100</div><div style="left:427.8px;top:5.30px;width:60px;text-align:center;font-size:13px;line-height:13px;color:#00c800;">110</div><div style="left:406.5px;top:5.30px;width:60px;text-align:center;font-size:13px;line-height:13px;color:#00c800;">120</div><div style="left:385.2px;top:5.30px;width:60px;text-align:center;font-size:13px;line-height:13px;color:#00c800;">130</div><div style="left:364.0px;top:5.30px;width:60px;text-align:center;font-size:13px;line-height:13px;color:#00c800;">140</div><div style="left:342.8px;top:5.30px;width:60px;text-align:center;font-size:13px;line-height:13px;color:#00c800;">150</div><div style="left:321.5px;top:5.30px;width:60px;text-align:center;font-size:13px;line-height:13px;color:#00c800;">160</div><div style="left:300.2px;top:5.30px;width:60px;text-align:center;font-size:13px;line-height:13px;color:#00c800;">170</div><div style="left:279.0px;top:5.30px;width:60px;text-align:center;font-size:13px;line-height:13px;color:#00c800;">180</div><div style="left:257.8px;top:5.30px;width:60px;text-align:center;font-size:13px;line-height:13px;color:#00c800;">190</div><div style="left:236.5px;top:5.30px;width:60px;text-align:center;font-size:13px;line-height:13px;color:#00c800;">200</div><div style="left:215.2px;top:5.30px;width:60px;text-align:center;font-size:13px;line-height:13px;color:#00c800;">210</div><div style="left:194.0px;top:5.30px;width:60px;text-align:center;font-size:13px;line-height:13px;color:#00c800;">220</div><div style="left:172.8px;top:5.30px;width:60px;text-align:center;font-size:13px;line-height:13px;color:#00c800;">230</div><div style="left:151.5px;top:5.30px;width:60px;text-align:center;font-size:13px;line-height:13px;color:#00c800;">240</div><div style="left:130.2px;top:5.30px;width:60px;text-align:center;font-size:13px;line-height:13px;color:#00c800;">250</div><div style="left:109.0px;top:5.30px;width:60px;text-align:center;font-size:13px;line-height:13px;color:#00c800;">260</div><div style="left:87.8px;top:5.30px;width:60px;text-align:center;font-size:13px;line-height:13px;color:#00c800;">270</div><div style="left:66.5px;top:5.30px;width:60px;text-align:center;font-size:13px;line-height:13px;color:#00c800;">280</div><div style="left:45.2px;top:5.30px;width:60px;text-align:center;font-size:13px;line-height:13px;color:#00c800;">290</div><div style="left:24.0px;top:5.30px;width:60px;text-align:center;font-size:13px;line-height:13px;color:#00c800;">300</div><div style="left:2.8px;top:5.30px;width:60px;text-align:center;font-size:13px;line-height:13px;color:#00c800;">310</div><div style="left:-18.5px;top:5.30px;width:60px;text-align:center;font-size:13px;line-height:13px;color:#00c800;">320</div></div>
<div style="left:436px;top:908px;width:6px;height:1px;background:#000"></div><div style="left:436px;top:906px;width:6px;height:1px;background:#000"></div><div style="left:436px;top:904px;width:6px;height:1px;background:#000"></div><div style="left:436px;top:902px;width:6px;height:1px;background:#000"></div><div style="left:436px;top:900px;width:6px;height:1px;background:#000"></div><div style="left:436px;top:898px;width:6px;height:1px;background:#000"></div><div style="left:436px;top:896px;width:6px;height:1px;background:#000"></div><div style="left:436px;top:894px;width:6px;height:1px;background:#000"></div><div style="left:431px;top:891px;width:11px;height:1px;background:#000"></div><div style="left:436px;top:889px;width:6px;height:1px;background:#000"></div><div style="left:436px;top:887px;width:6px;height:1px;background:#000"></div><div style="left:436px;top:885px;width:6px;height:1px;background:#000"></div><div style="left:436px;top:883px;width:6px;height:1px;background:#000"></div><div style="left:436px;top:881px;width:6px;height:1px;background:#000"></div><div style="left:436px;top:879px;width:6px;height:1px;background:#000"></div><div style="left:436px;top:877px;width:6px;height:1px;background:#000"></div><div style="left:436px;top:875px;width:6px;height:1px;background:#000"></div><div style="left:436px;top:872px;width:6px;height:1px;background:#000"></div><div style="left:431px;top:870px;width:11px;height:1px;background:#000"></div><div style="left:436px;top:868px;width:6px;height:1px;background:#000"></div><div style="left:436px;top:866px;width:6px;height:1px;background:#000"></div><div style="left:436px;top:864px;width:6px;height:1px;background:#000"></div><div style="left:436px;top:862px;width:6px;height:1px;background:#000"></div><div style="left:436px;top:860px;width:6px;height:1px;background:#000"></div><div style="left:436px;top:858px;width:6px;height:1px;background:#000"></div><div style="left:436px;top:855px;width:6px;height:1px;background:#000"></div><div style="left:436px;top:853px;width:6px;height:1px;background:#000"></div><div style="left:436px;top:851px;width:6px;height:1px;background:#000"></div><div style="left:431px;top:849px;width:11px;height:1px;background:#000"></div><div style="left:436px;top:847px;width:6px;height:1px;background:#000"></div><div style="left:436px;top:845px;width:6px;height:1px;background:#000"></div><div style="left:436px;top:843px;width:6px;height:1px;background:#000"></div><div style="left:436px;top:841px;width:6px;height:1px;background:#000"></div><div style="left:436px;top:838px;width:6px;height:1px;background:#000"></div><div style="left:436px;top:836px;width:6px;height:1px;background:#000"></div><div style="left:436px;top:834px;width:6px;height:1px;background:#000"></div><div style="left:436px;top:832px;width:6px;height:1px;background:#000"></div><div style="left:436px;top:830px;width:6px;height:1px;background:#000"></div><div style="left:431px;top:828px;width:11px;height:1px;background:#000"></div><div style="left:436px;top:826px;width:6px;height:1px;background:#000"></div><div style="left:436px;top:824px;width:6px;height:1px;background:#000"></div><div style="left:436px;top:821px;width:6px;height:1px;background:#000"></div><div style="left:436px;top:819px;width:6px;height:1px;background:#000"></div><div style="left:436px;top:817px;width:6px;height:1px;background:#000"></div><div style="left:436px;top:815px;width:6px;height:1px;background:#000"></div><div style="left:436px;top:813px;width:6px;height:1px;background:#000"></div><div style="left:436px;top:811px;width:6px;height:1px;background:#000"></div><div style="left:436px;top:809px;width:6px;height:1px;background:#000"></div><div style="left:431px;top:807px;width:11px;height:1px;background:#000"></div><div style="left:436px;top:804px;width:6px;height:1px;background:#000"></div><div style="left:436px;top:802px;width:6px;height:1px;background:#000"></div><div style="left:436px;top:800px;width:6px;height:1px;background:#000"></div><div style="left:436px;top:798px;width:6px;height:1px;background:#000"></div><div style="left:436px;top:796px;width:6px;height:1px;background:#000"></div><div style="left:436px;top:794px;width:6px;height:1px;background:#000"></div><div style="left:436px;top:792px;width:6px;height:1px;background:#000"></div><div style="left:436px;top:790px;width:6px;height:1px;background:#000"></div><div style="left:436px;top:788px;width:6px;height:1px;background:#000"></div><div style="left:431px;top:785px;width:11px;height:1px;background:#000"></div><div style="left:436px;top:783px;width:6px;height:1px;background:#000"></div><div style="left:436px;top:781px;width:6px;height:1px;background:#000"></div><div style="left:436px;top:779px;width:6px;height:1px;background:#000"></div><div style="left:436px;top:777px;width:6px;height:1px;background:#000"></div><div style="left:436px;top:775px;width:6px;height:1px;background:#000"></div><div style="left:436px;top:773px;width:6px;height:1px;background:#000"></div><div style="left:436px;top:771px;width:6px;height:1px;background:#000"></div><div style="left:436px;top:768px;width:6px;height:1px;background:#000"></div><div style="left:436px;top:766px;width:6px;height:1px;background:#000"></div><div style="left:431px;top:764px;width:11px;height:1px;background:#000"></div><div style="left:436px;top:762px;width:6px;height:1px;background:#000"></div><div style="left:436px;top:760px;width:6px;height:1px;background:#000"></div><div style="left:436px;top:758px;width:6px;height:1px;background:#000"></div><div style="left:436px;top:756px;width:6px;height:1px;background:#000"></div><div style="left:436px;top:754px;width:6px;height:1px;background:#000"></div><div style="left:436px;top:751px;width:6px;height:1px;background:#000"></div><div style="left:436px;top:749px;width:6px;height:1px;background:#000"></div><div style="left:436px;top:747px;width:6px;height:1px;background:#000"></div><div style="left:436px;top:745px;width:6px;height:1px;background:#000"></div><div style="left:431px;top:743px;width:11px;height:1px;background:#000"></div><div style="left:436px;top:741px;width:6px;height:1px;background:#000"></div><div style="left:436px;top:739px;width:6px;height:1px;background:#000"></div><div style="left:436px;top:737px;width:6px;height:1px;background:#000"></div><div style="left:436px;top:734px;width:6px;height:1px;background:#000"></div><div style="left:436px;top:732px;width:6px;height:1px;background:#000"></div><div style="left:436px;top:730px;width:6px;height:1px;background:#000"></div><div style="left:436px;top:728px;width:6px;height:1px;background:#000"></div><div style="left:436px;top:726px;width:6px;height:1px;background:#000"></div><div style="left:436px;top:724px;width:6px;height:1px;background:#000"></div><div style="left:431px;top:722px;width:11px;height:1px;background:#000"></div><div style="left:436px;top:720px;width:6px;height:1px;background:#000"></div><div style="left:436px;top:717px;width:6px;height:1px;background:#000"></div><div style="left:436px;top:715px;width:6px;height:1px;background:#000"></div><div style="left:436px;top:713px;width:6px;height:1px;background:#000"></div><div style="left:436px;top:711px;width:6px;height:1px;background:#000"></div><div style="left:436px;top:709px;width:6px;height:1px;background:#000"></div><div style="left:436px;top:707px;width:6px;height:1px;background:#000"></div><div style="left:436px;top:705px;width:6px;height:1px;background:#000"></div><div style="left:436px;top:703px;width:6px;height:1px;background:#000"></div><div style="left:431px;top:701px;width:11px;height:1px;background:#000"></div><div style="left:436px;top:698px;width:6px;height:1px;background:#000"></div><div style="left:436px;top:696px;width:6px;height:1px;background:#000"></div><div style="left:436px;top:694px;width:6px;height:1px;background:#000"></div><div style="left:436px;top:692px;width:6px;height:1px;background:#000"></div><div style="left:436px;top:690px;width:6px;height:1px;background:#000"></div><div style="left:436px;top:688px;width:6px;height:1px;background:#000"></div><div style="left:436px;top:686px;width:6px;height:1px;background:#000"></div><div style="left:436px;top:684px;width:6px;height:1px;background:#000"></div><div style="left:436px;top:681px;width:6px;height:1px;background:#000"></div><div style="left:431px;top:679px;width:11px;height:1px;background:#000"></div><div style="left:436px;top:677px;width:6px;height:1px;background:#000"></div><div style="left:436px;top:675px;width:6px;height:1px;background:#000"></div><div style="left:436px;top:673px;width:6px;height:1px;background:#000"></div><div style="left:436px;top:671px;width:6px;height:1px;background:#000"></div><div style="left:436px;top:669px;width:6px;height:1px;background:#000"></div><div style="left:436px;top:667px;width:6px;height:1px;background:#000"></div><div style="left:436px;top:664px;width:6px;height:1px;background:#000"></div><div style="left:436px;top:662px;width:6px;height:1px;background:#000"></div><div style="left:436px;top:660px;width:6px;height:1px;background:#000"></div><div style="left:431px;top:658px;width:11px;height:1px;background:#000"></div><div style="left:436px;top:656px;width:6px;height:1px;background:#000"></div><div style="left:436px;top:654px;width:6px;height:1px;background:#000"></div><div style="left:436px;top:652px;width:6px;height:1px;background:#000"></div><div style="left:436px;top:650px;width:6px;height:1px;background:#000"></div><div style="left:436px;top:647px;width:6px;height:1px;background:#000"></div><div style="left:436px;top:645px;width:6px;height:1px;background:#000"></div><div style="left:436px;top:643px;width:6px;height:1px;background:#000"></div><div style="left:436px;top:641px;width:6px;height:1px;background:#000"></div><div style="left:436px;top:639px;width:6px;height:1px;background:#000"></div><div style="left:431px;top:637px;width:11px;height:1px;background:#000"></div><div style="left:436px;top:635px;width:6px;height:1px;background:#000"></div><div style="left:436px;top:633px;width:6px;height:1px;background:#000"></div><div style="left:436px;top:630px;width:6px;height:1px;background:#000"></div><div style="left:436px;top:628px;width:6px;height:1px;background:#000"></div><div style="left:436px;top:626px;width:6px;height:1px;background:#000"></div><div style="left:436px;top:624px;width:6px;height:1px;background:#000"></div><div style="left:436px;top:622px;width:6px;height:1px;background:#000"></div><div style="left:436px;top:620px;width:6px;height:1px;background:#000"></div><div style="left:436px;top:618px;width:6px;height:1px;background:#000"></div><div style="left:431px;top:616px;width:11px;height:1px;background:#000"></div><div style="left:436px;top:613px;width:6px;height:1px;background:#000"></div><div style="left:436px;top:611px;width:6px;height:1px;background:#000"></div><div style="left:436px;top:609px;width:6px;height:1px;background:#000"></div><div style="left:436px;top:607px;width:6px;height:1px;background:#000"></div><div style="left:436px;top:605px;width:6px;height:1px;background:#000"></div><div style="left:436px;top:603px;width:6px;height:1px;background:#000"></div><div style="left:436px;top:601px;width:6px;height:1px;background:#000"></div><div style="left:436px;top:599px;width:6px;height:1px;background:#000"></div><div style="left:436px;top:597px;width:6px;height:1px;background:#000"></div><div style="left:431px;top:594px;width:11px;height:1px;background:#000"></div><div style="left:436px;top:592px;width:6px;height:1px;background:#000"></div><div style="left:436px;top:590px;width:6px;height:1px;background:#000"></div><div style="left:436px;top:588px;width:6px;height:1px;background:#000"></div><div style="left:436px;top:586px;width:6px;height:1px;background:#000"></div><div style="left:436px;top:584px;width:6px;height:1px;background:#000"></div><div style="left:436px;top:582px;width:6px;height:1px;background:#000"></div><div style="left:436px;top:580px;width:6px;height:1px;background:#000"></div><div style="left:436px;top:577px;width:6px;height:1px;background:#000"></div><div style="left:436px;top:575px;width:6px;height:1px;background:#000"></div><div style="left:431px;top:573px;width:11px;height:1px;background:#000"></div><div style="left:436px;top:571px;width:6px;height:1px;background:#000"></div><div style="left:436px;top:569px;width:6px;height:1px;background:#000"></div><div style="left:436px;top:567px;width:6px;height:1px;background:#000"></div><div style="left:436px;top:565px;width:6px;height:1px;background:#000"></div><div style="left:436px;top:563px;width:6px;height:1px;background:#000"></div><div style="left:436px;top:560px;width:6px;height:1px;background:#000"></div><div style="left:436px;top:558px;width:6px;height:1px;background:#000"></div><div style="left:436px;top:556px;width:6px;height:1px;background:#000"></div><div style="left:436px;top:554px;width:6px;height:1px;background:#000"></div><div style="left:431px;top:552px;width:11px;height:1px;background:#000"></div><div style="left:436px;top:550px;width:6px;height:1px;background:#000"></div><div style="left:436px;top:548px;width:6px;height:1px;background:#000"></div><div style="left:436px;top:546px;width:6px;height:1px;background:#000"></div><div style="left:436px;top:543px;width:6px;height:1px;background:#000"></div><div style="left:436px;top:541px;width:6px;height:1px;background:#000"></div><div style="left:436px;top:539px;width:6px;height:1px;background:#000"></div><div style="left:436px;top:537px;width:6px;height:1px;background:#000"></div><div style="left:436px;top:535px;width:6px;height:1px;background:#000"></div><div style="left:436px;top:533px;width:6px;height:1px;background:#000"></div><div style="left:431px;top:531px;width:11px;height:1px;background:#000"></div><div style="left:436px;top:529px;width:6px;height:1px;background:#000"></div><div style="left:436px;top:526px;width:6px;height:1px;background:#000"></div><div style="left:436px;top:524px;width:6px;height:1px;background:#000"></div><div style="left:436px;top:522px;width:6px;height:1px;background:#000"></div><div style="left:436px;top:520px;width:6px;height:1px;background:#000"></div><div style="left:436px;top:518px;width:6px;height:1px;background:#000"></div><div style="left:436px;top:516px;width:6px;height:1px;background:#000"></div><div style="left:436px;top:514px;width:6px;height:1px;background:#000"></div><div style="left:436px;top:512px;width:6px;height:1px;background:#000"></div><div style="left:431px;top:510px;width:11px;height:1px;background:#000"></div><div style="left:436px;top:507px;width:6px;height:1px;background:#000"></div><div style="left:436px;top:505px;width:6px;height:1px;background:#000"></div><div style="left:436px;top:503px;width:6px;height:1px;background:#000"></div><div style="left:436px;top:501px;width:6px;height:1px;background:#000"></div><div style="left:436px;top:499px;width:6px;height:1px;background:#000"></div><div style="left:436px;top:497px;width:6px;height:1px;background:#000"></div><div style="left:436px;top:495px;width:6px;height:1px;background:#000"></div><div style="left:436px;top:493px;width:6px;height:1px;background:#000"></div><div style="left:436px;top:490px;width:6px;height:1px;background:#000"></div><div style="left:431px;top:488px;width:11px;height:1px;background:#000"></div><div style="left:436px;top:486px;width:6px;height:1px;background:#000"></div><div style="left:436px;top:484px;width:6px;height:1px;background:#000"></div><div style="left:436px;top:482px;width:6px;height:1px;background:#000"></div><div style="left:436px;top:480px;width:6px;height:1px;background:#000"></div><div style="left:436px;top:478px;width:6px;height:1px;background:#000"></div><div style="left:436px;top:476px;width:6px;height:1px;background:#000"></div><div style="left:436px;top:473px;width:6px;height:1px;background:#000"></div><div style="left:436px;top:471px;width:6px;height:1px;background:#000"></div><div style="left:436px;top:469px;width:6px;height:1px;background:#000"></div><div style="left:431px;top:467px;width:11px;height:1px;background:#000"></div><div style="left:436px;top:465px;width:6px;height:1px;background:#000"></div><div style="left:436px;top:463px;width:6px;height:1px;background:#000"></div><div style="left:436px;top:461px;width:6px;height:1px;background:#000"></div><div style="left:436px;top:459px;width:6px;height:1px;background:#000"></div><div style="left:436px;top:456px;width:6px;height:1px;background:#000"></div><div style="left:436px;top:454px;width:6px;height:1px;background:#000"></div><div style="left:436px;top:452px;width:6px;height:1px;background:#000"></div><div style="left:436px;top:450px;width:6px;height:1px;background:#000"></div><div style="left:436px;top:448px;width:6px;height:1px;background:#000"></div><div style="left:431px;top:446px;width:11px;height:1px;background:#000"></div><div style="left:436px;top:444px;width:6px;height:1px;background:#000"></div><div style="left:436px;top:442px;width:6px;height:1px;background:#000"></div><div style="left:436px;top:439px;width:6px;height:1px;background:#000"></div><div style="left:436px;top:437px;width:6px;height:1px;background:#000"></div><div style="left:436px;top:435px;width:6px;height:1px;background:#000"></div><div style="left:436px;top:433px;width:6px;height:1px;background:#000"></div><div style="left:436px;top:431px;width:6px;height:1px;background:#000"></div><div style="left:436px;top:429px;width:6px;height:1px;background:#000"></div><div style="left:436px;top:427px;width:6px;height:1px;background:#000"></div><div style="left:431px;top:425px;width:11px;height:1px;background:#000"></div><div style="left:436px;top:422px;width:6px;height:1px;background:#000"></div><div style="left:436px;top:420px;width:6px;height:1px;background:#000"></div><div style="left:436px;top:418px;width:6px;height:1px;background:#000"></div><div style="left:436px;top:416px;width:6px;height:1px;background:#000"></div><div style="left:436px;top:414px;width:6px;height:1px;background:#000"></div><div style="left:436px;top:412px;width:6px;height:1px;background:#000"></div><div style="left:436px;top:410px;width:6px;height:1px;background:#000"></div><div style="left:436px;top:408px;width:6px;height:1px;background:#000"></div><div style="left:436px;top:406px;width:6px;height:1px;background:#000"></div><div style="left:431px;top:403px;width:11px;height:1px;background:#000"></div><div style="left:436px;top:401px;width:6px;height:1px;background:#000"></div><div style="left:436px;top:399px;width:6px;height:1px;background:#000"></div><div style="left:436px;top:397px;width:6px;height:1px;background:#000"></div><div style="left:436px;top:395px;width:6px;height:1px;background:#000"></div><div style="left:436px;top:393px;width:6px;height:1px;background:#000"></div><div style="left:436px;top:391px;width:6px;height:1px;background:#000"></div><div style="left:436px;top:389px;width:6px;height:1px;background:#000"></div><div style="left:436px;top:386px;width:6px;height:1px;background:#000"></div><div style="left:436px;top:384px;width:6px;height:1px;background:#000"></div><div style="left:431px;top:382px;width:11px;height:1px;background:#000"></div><div style="left:436px;top:380px;width:6px;height:1px;background:#000"></div><div style="left:436px;top:378px;width:6px;height:1px;background:#000"></div><div style="left:436px;top:376px;width:6px;height:1px;background:#000"></div><div style="left:436px;top:374px;width:6px;height:1px;background:#000"></div><div style="left:436px;top:372px;width:6px;height:1px;background:#000"></div><div style="left:436px;top:369px;width:6px;height:1px;background:#000"></div><div style="left:436px;top:367px;width:6px;height:1px;background:#000"></div><div style="left:436px;top:365px;width:6px;height:1px;background:#000"></div><div style="left:436px;top:363px;width:6px;height:1px;background:#000"></div><div style="left:431px;top:361px;width:11px;height:1px;background:#000"></div><div style="left:436px;top:359px;width:6px;height:1px;background:#000"></div><div style="left:436px;top:357px;width:6px;height:1px;background:#000"></div><div style="left:436px;top:355px;width:6px;height:1px;background:#000"></div><div style="left:436px;top:352px;width:6px;height:1px;background:#000"></div><div style="left:436px;top:350px;width:6px;height:1px;background:#000"></div><div style="left:436px;top:348px;width:6px;height:1px;background:#000"></div><div style="left:436px;top:346px;width:6px;height:1px;background:#000"></div><div style="left:436px;top:344px;width:6px;height:1px;background:#000"></div><div style="left:436px;top:342px;width:6px;height:1px;background:#000"></div><div style="left:431px;top:340px;width:11px;height:1px;background:#000"></div><div style="left:436px;top:338px;width:6px;height:1px;background:#000"></div><div style="left:436px;top:335px;width:6px;height:1px;background:#000"></div><div style="left:436px;top:333px;width:6px;height:1px;background:#000"></div><div style="left:436px;top:331px;width:6px;height:1px;background:#000"></div><div style="left:436px;top:329px;width:6px;height:1px;background:#000"></div><div style="left:436px;top:327px;width:6px;height:1px;background:#000"></div><div style="left:436px;top:325px;width:6px;height:1px;background:#000"></div><div style="left:436px;top:323px;width:6px;height:1px;background:#000"></div><div style="left:436px;top:321px;width:6px;height:1px;background:#000"></div><div style="left:431px;top:319px;width:11px;height:1px;background:#000"></div><div style="left:436px;top:316px;width:6px;height:1px;background:#000"></div><div style="left:436px;top:314px;width:6px;height:1px;background:#000"></div><div style="left:436px;top:312px;width:6px;height:1px;background:#000"></div><div style="left:436px;top:310px;width:6px;height:1px;background:#000"></div><div style="left:436px;top:308px;width:6px;height:1px;background:#000"></div><div style="left:436px;top:306px;width:6px;height:1px;background:#000"></div><div style="left:436px;top:304px;width:6px;height:1px;background:#000"></div><div style="left:436px;top:302px;width:6px;height:1px;background:#000"></div><div style="left:436px;top:299px;width:6px;height:1px;background:#000"></div><div style="left:431px;top:297px;width:11px;height:1px;background:#000"></div><div style="left:436px;top:295px;width:6px;height:1px;background:#000"></div><div style="left:436px;top:293px;width:6px;height:1px;background:#000"></div><div style="left:436px;top:291px;width:6px;height:1px;background:#000"></div><div style="left:436px;top:289px;width:6px;height:1px;background:#000"></div><div style="left:436px;top:287px;width:6px;height:1px;background:#000"></div><div style="left:436px;top:285px;width:6px;height:1px;background:#000"></div><div style="left:436px;top:282px;width:6px;height:1px;background:#000"></div><div style="left:436px;top:280px;width:6px;height:1px;background:#000"></div><div style="left:436px;top:278px;width:6px;height:1px;background:#000"></div><div style="left:431px;top:276px;width:11px;height:1px;background:#000"></div><div style="left:436px;top:274px;width:6px;height:1px;background:#000"></div><div style="left:436px;top:272px;width:6px;height:1px;background:#000"></div><div style="left:436px;top:270px;width:6px;height:1px;background:#000"></div><div style="left:436px;top:268px;width:6px;height:1px;background:#000"></div><div style="left:436px;top:265px;width:6px;height:1px;background:#000"></div><div style="left:436px;top:263px;width:6px;height:1px;background:#000"></div><div style="left:436px;top:261px;width:6px;height:1px;background:#000"></div><div style="left:436px;top:259px;width:6px;height:1px;background:#000"></div><div style="left:436px;top:257px;width:6px;height:1px;background:#000"></div><div style="left:431px;top:255px;width:11px;height:1px;background:#000"></div><div style="left:436px;top:253px;width:6px;height:1px;background:#000"></div><div style="left:436px;top:251px;width:6px;height:1px;background:#000"></div><div style="left:436px;top:248px;width:6px;height:1px;background:#000"></div><div style="left:436px;top:246px;width:6px;height:1px;background:#000"></div><div style="left:436px;top:244px;width:6px;height:1px;background:#000"></div><div style="left:436px;top:242px;width:6px;height:1px;background:#000"></div><div style="left:436px;top:240px;width:6px;height:1px;background:#000"></div><div style="left:436px;top:238px;width:6px;height:1px;background:#000"></div><div style="left:436px;top:236px;width:6px;height:1px;background:#000"></div><div style="left:431px;top:234px;width:11px;height:1px;background:#000"></div><div style="left:436px;top:231px;width:6px;height:1px;background:#000"></div><div style="left:436px;top:229px;width:6px;height:1px;background:#000"></div><div style="left:436px;top:227px;width:6px;height:1px;background:#000"></div>
<div style="left:414px;top:227px;width:28px;height:684px;overflow:hidden;"><div style="left:-20px;top:680.0px;width:60px;height:13px;text-align:center;font-size:13px;line-height:13px;color:#00c800;transform:rotate(-90deg);">-10</div><div style="left:-20px;top:658.0px;width:60px;height:13px;text-align:center;font-size:13px;line-height:13px;color:#00c800;transform:rotate(-90deg);">0</div><div style="left:-20px;top:637.0px;width:60px;height:13px;text-align:center;font-size:13px;line-height:13px;color:#00c800;transform:rotate(-90deg);">10</div><div style="left:-20px;top:616.0px;width:60px;height:13px;text-align:center;font-size:13px;line-height:13px;color:#00c800;transform:rotate(-90deg);">20</div><div style="left:-20px;top:595.0px;width:60px;height:13px;text-align:center;font-size:13px;line-height:13px;color:#00c800;transform:rotate(-90deg);">30</div><div style="left:-20px;top:574.0px;width:60px;height:13px;text-align:center;font-size:13px;line-height:13px;color:#00c800;transform:rotate(-90deg);">40</div><div style="left:-20px;top:552.0px;width:60px;height:13px;text-align:center;font-size:13px;line-height:13px;color:#00c800;transform:rotate(-90deg);">50</div><div style="left:-20px;top:531.0px;width:60px;height:13px;text-align:center;font-size:13px;line-height:13px;color:#00c800;transform:rotate(-90deg);">60</div><div style="left:-20px;top:510.0px;width:60px;height:13px;text-align:center;font-size:13px;line-height:13px;color:#00c800;transform:rotate(-90deg);">70</div><div style="left:-20px;top:489.0px;width:60px;height:13px;text-align:center;font-size:13px;line-height:13px;color:#00c800;transform:rotate(-90deg);">80</div><div style="left:-20px;top:468.0px;width:60px;height:13px;text-align:center;font-size:13px;line-height:13px;color:#00c800;transform:rotate(-90deg);">90</div><div style="left:-20px;top:446.0px;width:60px;height:13px;text-align:center;font-size:13px;line-height:13px;color:#00c800;transform:rotate(-90deg);">100</div><div style="left:-20px;top:425.0px;width:60px;height:13px;text-align:center;font-size:13px;line-height:13px;color:#00c800;transform:rotate(-90deg);">110</div><div style="left:-20px;top:404.0px;width:60px;height:13px;text-align:center;font-size:13px;line-height:13px;color:#00c800;transform:rotate(-90deg);">120</div><div style="left:-20px;top:383.0px;width:60px;height:13px;text-align:center;font-size:13px;line-height:13px;color:#00c800;transform:rotate(-90deg);">130</div><div style="left:-20px;top:361.0px;width:60px;height:13px;text-align:center;font-size:13px;line-height:13px;color:#00c800;transform:rotate(-90deg);">140</div><div style="left:-20px;top:340.0px;width:60px;height:13px;text-align:center;font-size:13px;line-height:13px;color:#00c800;transform:rotate(-90deg);">150</div><div style="left:-20px;top:319.0px;width:60px;height:13px;text-align:center;font-size:13px;line-height:13px;color:#00c800;transform:rotate(-90deg);">160</div><div style="left:-20px;top:298.0px;width:60px;height:13px;text-align:center;font-size:13px;line-height:13px;color:#00c800;transform:rotate(-90deg);">170</div><div style="left:-20px;top:277.0px;width:60px;height:13px;text-align:center;font-size:13px;line-height:13px;color:#00c800;transform:rotate(-90deg);">180</div><div style="left:-20px;top:255.0px;width:60px;height:13px;text-align:center;font-size:13px;line-height:13px;color:#00c800;transform:rotate(-90deg);">190</div><div style="left:-20px;top:234.0px;width:60px;height:13px;text-align:center;font-size:13px;line-height:13px;color:#00c800;transform:rotate(-90deg);">200</div><div style="left:-20px;top:213.0px;width:60px;height:13px;text-align:center;font-size:13px;line-height:13px;color:#00c800;transform:rotate(-90deg);">210</div><div style="left:-20px;top:192.0px;width:60px;height:13px;text-align:center;font-size:13px;line-height:13px;color:#00c800;transform:rotate(-90deg);">220</div><div style="left:-20px;top:170.0px;width:60px;height:13px;text-align:center;font-size:13px;line-height:13px;color:#00c800;transform:rotate(-90deg);">230</div><div style="left:-20px;top:149.0px;width:60px;height:13px;text-align:center;font-size:13px;line-height:13px;color:#00c800;transform:rotate(-90deg);">240</div><div style="left:-20px;top:128.0px;width:60px;height:13px;text-align:center;font-size:13px;line-height:13px;color:#00c800;transform:rotate(-90deg);">250</div><div style="left:-20px;top:107.0px;width:60px;height:13px;text-align:center;font-size:13px;line-height:13px;color:#00c800;transform:rotate(-90deg);">260</div><div style="left:-20px;top:86.0px;width:60px;height:13px;text-align:center;font-size:13px;line-height:13px;color:#00c800;transform:rotate(-90deg);">270</div><div style="left:-20px;top:64.0px;width:60px;height:13px;text-align:center;font-size:13px;line-height:13px;color:#00c800;transform:rotate(-90deg);">280</div><div style="left:-20px;top:43.0px;width:60px;height:13px;text-align:center;font-size:13px;line-height:13px;color:#00c800;transform:rotate(-90deg);">290</div><div style="left:-20px;top:22.0px;width:60px;height:13px;text-align:center;font-size:13px;line-height:13px;color:#00c800;transform:rotate(-90deg);">300</div><div style="left:-20px;top:1.0px;width:60px;height:13px;text-align:center;font-size:13px;line-height:13px;color:#00c800;transform:rotate(-90deg);">310</div><div style="left:-20px;top:-21.0px;width:60px;height:13px;text-align:center;font-size:13px;line-height:13px;color:#00c800;transform:rotate(-90deg);">320</div></div>
<div style="left:454px;top:227px;width:690px;height:665px;overflow:hidden;"><div style="left:244px;top:34px;width:600px;height:800px;border-left:1px solid #ff0000;border-top:1px solid #ff0000;background:#fff;"></div><div style="left:201px;top:154px;width:43px;height:43px;background:#ff0040;"></div><div style="left:201px;top:152px;width:37px;height:2px;background:repeating-linear-gradient(90deg,#8c8c8c 0 1px,#c4c4c4 1px 2px,#a8a8a8 2px 3px,#e4e4e4 3px 4px);opacity:.55"></div><div style="left:246px;top:154px;width:43px;height:43px;background:#f20046;"></div><div style="left:246px;top:152px;width:37px;height:2px;background:repeating-linear-gradient(90deg,#8c8c8c 0 1px,#c4c4c4 1px 2px,#a8a8a8 2px 3px,#e4e4e4 3px 4px);opacity:.55"></div><div style="left:291px;top:154px;width:42px;height:43px;background:#e0004a;"></div><div style="left:291px;top:152px;width:37px;height:2px;background:repeating-linear-gradient(90deg,#8c8c8c 0 1px,#c4c4c4 1px 2px,#a8a8a8 2px 3px,#e4e4e4 3px 4px);opacity:.55"></div><div style="left:336px;top:154px;width:42px;height:43px;background:#c8004c;"></div><div style="left:336px;top:152px;width:37px;height:2px;background:repeating-linear-gradient(90deg,#8c8c8c 0 1px,#c4c4c4 1px 2px,#a8a8a8 2px 3px,#e4e4e4 3px 4px);opacity:.55"></div><div style="left:381px;top:154px;width:42px;height:43px;background:#b0004c;"></div><div style="left:381px;top:152px;width:37px;height:2px;background:repeating-linear-gradient(90deg,#8c8c8c 0 1px,#c4c4c4 1px 2px,#a8a8a8 2px 3px,#e4e4e4 3px 4px);opacity:.55"></div><div style="left:425px;top:154px;width:43px;height:43px;background:#980050;"></div><div style="left:425px;top:152px;width:37px;height:2px;background:repeating-linear-gradient(90deg,#8c8c8c 0 1px,#c4c4c4 1px 2px,#a8a8a8 2px 3px,#e4e4e4 3px 4px);opacity:.55"></div><div style="left:470px;top:154px;width:43px;height:43px;background:#880055;"></div><div style="left:470px;top:152px;width:37px;height:2px;background:repeating-linear-gradient(90deg,#8c8c8c 0 1px,#c4c4c4 1px 2px,#a8a8a8 2px 3px,#e4e4e4 3px 4px);opacity:.55"></div><div style="left:515px;top:154px;width:42px;height:43px;background:#78145c;"></div><div style="left:515px;top:152px;width:37px;height:2px;background:repeating-linear-gradient(90deg,#8c8c8c 0 1px,#c4c4c4 1px 2px,#a8a8a8 2px 3px,#e4e4e4 3px 4px);opacity:.55"></div><div style="left:560px;top:154px;width:42px;height:43px;background:#5c1c5e;"></div><div style="left:560px;top:152px;width:37px;height:2px;background:repeating-linear-gradient(90deg,#8c8c8c 0 1px,#c4c4c4 1px 2px,#a8a8a8 2px 3px,#e4e4e4 3px 4px);opacity:.55"></div><div style="left:605px;top:154px;width:42px;height:43px;background:#44205c;"></div><div style="left:605px;top:152px;width:37px;height:2px;background:repeating-linear-gradient(90deg,#8c8c8c 0 1px,#c4c4c4 1px 2px,#a8a8a8 2px 3px,#e4e4e4 3px 4px);opacity:.55"></div><div style="left:650px;top:154px;width:42px;height:43px;background:#24225a;"></div><div style="left:650px;top:152px;width:37px;height:2px;background:repeating-linear-gradient(90deg,#8c8c8c 0 1px,#c4c4c4 1px 2px,#a8a8a8 2px 3px,#e4e4e4 3px 4px);opacity:.55"></div><div style="left:201px;top:201px;width:43px;height:43px;background:#ff0a50;"></div><div style="left:201px;top:199px;width:37px;height:2px;background:repeating-linear-gradient(90deg,#8c8c8c 0 1px,#c4c4c4 1px 2px,#a8a8a8 2px 3px,#e4e4e4 3px 4px);opacity:.55"></div><div style="left:246px;top:201px;width:43px;height:43px;background:#f01456;"></div><div style="left:246px;top:199px;width:37px;height:2px;background:repeating-linear-gradient(90deg,#8c8c8c 0 1px,#c4c4c4 1px 2px,#a8a8a8 2px 3px,#e4e4e4 3px 4px);opacity:.55"></div><div style="left:291px;top:201px;width:42px;height:43px;background:#de1855;"></div><div style="left:291px;top:199px;width:37px;height:2px;background:repeating-linear-gradient(90deg,#8c8c8c 0 1px,#c4c4c4 1px 2px,#a8a8a8 2px 3px,#e4e4e4 3px 4px);opacity:.55"></div><div style="left:336px;top:201px;width:42px;height:43px;background:#c81a55;"></div><div style="left:336px;top:199px;width:37px;height:2px;background:repeating-linear-gradient(90deg,#8c8c8c 0 1px,#c4c4c4 1px 2px,#a8a8a8 2px 3px,#e4e4e4 3px 4px);opacity:.55"></div><div style="left:381px;top:201px;width:42px;height:43px;background:#b02058;"></div><div style="left:381px;top:199px;width:37px;height:2px;background:repeating-linear-gradient(90deg,#8c8c8c 0 1px,#c4c4c4 1px 2px,#a8a8a8 2px 3px,#e4e4e4 3px 4px);opacity:.55"></div><div style="left:425px;top:201px;width:43px;height:43px;background:#982858;"></div><div style="left:425px;top:199px;width:37px;height:2px;background:repeating-linear-gradient(90deg,#8c8c8c 0 1px,#c4c4c4 1px 2px,#a8a8a8 2px 3px,#e4e4e4 3px 4px);opacity:.55"></div><div style="left:470px;top:201px;width:43px;height:43px;background:#7e2858;"></div><div style="left:470px;top:199px;width:37px;height:2px;background:repeating-linear-gradient(90deg,#8c8c8c 0 1px,#c4c4c4 1px 2px,#a8a8a8 2px 3px,#e4e4e4 3px 4px);opacity:.55"></div><div style="left:515px;top:201px;width:42px;height:43px;background:#6a2c5a;"></div><div style="left:515px;top:199px;width:37px;height:2px;background:repeating-linear-gradient(90deg,#8c8c8c 0 1px,#c4c4c4 1px 2px,#a8a8a8 2px 3px,#e4e4e4 3px 4px);opacity:.55"></div><div style="left:560px;top:201px;width:42px;height:43px;background:#562c5c;"></div><div style="left:560px;top:199px;width:37px;height:2px;background:repeating-linear-gradient(90deg,#8c8c8c 0 1px,#c4c4c4 1px 2px,#a8a8a8 2px 3px,#e4e4e4 3px 4px);opacity:.55"></div><div style="left:605px;top:201px;width:42px;height:43px;background:#3c2c58;"></div><div style="left:605px;top:199px;width:37px;height:2px;background:repeating-linear-gradient(90deg,#8c8c8c 0 1px,#c4c4c4 1px 2px,#a8a8a8 2px 3px,#e4e4e4 3px 4px);opacity:.55"></div><div style="left:650px;top:201px;width:42px;height:43px;background:#182c58;"></div><div style="left:650px;top:199px;width:37px;height:2px;background:repeating-linear-gradient(90deg,#8c8c8c 0 1px,#c4c4c4 1px 2px,#a8a8a8 2px 3px,#e4e4e4 3px 4px);opacity:.55"></div><div style="left:201px;top:249px;width:43px;height:42px;background:#ff4a64;"></div><div style="left:201px;top:247px;width:37px;height:2px;background:repeating-linear-gradient(90deg,#8c8c8c 0 1px,#c4c4c4 1px 2px,#a8a8a8 2px 3px,#e4e4e4 3px 4px);opacity:.55"></div><div style="left:246px;top:249px;width:43px;height:42px;background:#fc4a68;"></div><div style="left:246px;top:247px;width:37px;height:2px;background:repeating-linear-gradient(90deg,#8c8c8c 0 1px,#c4c4c4 1px 2px,#a8a8a8 2px 3px,#e4e4e4 3px 4px);opacity:.55"></div><div style="left:291px;top:249px;width:42px;height:42px;background:#e44a64;"></div><div style="left:291px;top:247px;width:37px;height:2px;background:repeating-linear-gradient(90deg,#8c8c8c 0 1px,#c4c4c4 1px 2px,#a8a8a8 2px 3px,#e4e4e4 3px 4px);opacity:.55"></div><div style="left:336px;top:249px;width:42px;height:42px;background:#c84464;"></div><div style="left:336px;top:247px;width:37px;height:2px;background:repeating-linear-gradient(90deg,#8c8c8c 0 1px,#c4c4c4 1px 2px,#a8a8a8 2px 3px,#e4e4e4 3px 4px);opacity:.55"></div><div style="left:381px;top:249px;width:42px;height:42px;background:#ae4460;"></div><div style="left:381px;top:247px;width:37px;height:2px;background:repeating-linear-gradient(90deg,#8c8c8c 0 1px,#c4c4c4 1px 2px,#a8a8a8 2px 3px,#e4e4e4 3px 4px);opacity:.55"></div><div style="left:425px;top:249px;width:43px;height:42px;background:#964060;"></div><div style="left:425px;top:247px;width:37px;height:2px;background:repeating-linear-gradient(90deg,#8c8c8c 0 1px,#c4c4c4 1px 2px,#a8a8a8 2px 3px,#e4e4e4 3px 4px);opacity:.55"></div><div style="left:470px;top:249px;width:43px;height:42px;background:#7a3c5c;"></div><div style="left:470px;top:247px;width:37px;height:2px;background:repeating-linear-gradient(90deg,#8c8c8c 0 1px,#c4c4c4 1px 2px,#a8a8a8 2px 3px,#e4e4e4 3px 4px);opacity:.55"></div><div style="left:515px;top:249px;width:42px;height:42px;background:#663c5c;"></div><div style="left:515px;top:247px;width:37px;height:2px;background:repeating-linear-gradient(90deg,#8c8c8c 0 1px,#c4c4c4 1px 2px,#a8a8a8 2px 3px,#e4e4e4 3px 4px);opacity:.55"></div><div style="left:560px;top:249px;width:42px;height:42px;background:#503c5c;"></div><div style="left:560px;top:247px;width:37px;height:2px;background:repeating-linear-gradient(90deg,#8c8c8c 0 1px,#c4c4c4 1px 2px,#a8a8a8 2px 3px,#e4e4e4 3px 4px);opacity:.55"></div><div style="left:605px;top:249px;width:42px;height:42px;background:#303858;"></div><div style="left:605px;top:247px;width:37px;height:2px;background:repeating-linear-gradient(90deg,#8c8c8c 0 1px,#c4c4c4 1px 2px,#a8a8a8 2px 3px,#e4e4e4 3px 4px);opacity:.55"></div><div style="left:650px;top:249px;width:42px;height:42px;background:#003460;"></div><div style="left:650px;top:247px;width:37px;height:2px;background:repeating-linear-gradient(90deg,#8c8c8c 0 1px,#c4c4c4 1px 2px,#a8a8a8 2px 3px,#e4e4e4 3px 4px);opacity:.55"></div><div style="left:201px;top:296px;width:43px;height:42px;background:#ff7070;"></div><div style="left:201px;top:294px;width:37px;height:2px;background:repeating-linear-gradient(90deg,#8c8c8c 0 1px,#c4c4c4 1px 2px,#a8a8a8 2px 3px,#e4e4e4 3px 4px);opacity:.55"></div><div style="left:246px;top:296px;width:43px;height:42px;background:#ff7078;"></div><div style="left:246px;top:294px;width:37px;height:2px;background:repeating-linear-gradient(90deg,#8c8c8c 0 1px,#c4c4c4 1px 2px,#a8a8a8 2px 3px,#e4e4e4 3px 4px);opacity:.55"></div><div style="left:291px;top:296px;width:42px;height:42px;background:#ec6c70;"></div><div style="left:291px;top:294px;width:37px;height:2px;background:repeating-linear-gradient(90deg,#8c8c8c 0 1px,#c4c4c4 1px 2px,#a8a8a8 2px 3px,#e4e4e4 3px 4px);opacity:.55"></div><div style="left:336px;top:296px;width:42px;height:42px;background:#cc6470;"></div><div style="left:336px;top:294px;width:37px;height:2px;background:repeating-linear-gradient(90deg,#8c8c8c 0 1px,#c4c4c4 1px 2px,#a8a8a8 2px 3px,#e4e4e4 3px 4px);opacity:.55"></div><div style="left:381px;top:296px;width:42px;height:42px;background:#ae5e6c;"></div><div style="left:381px;top:294px;width:37px;height:2px;background:repeating-linear-gradient(90deg,#8c8c8c 0 1px,#c4c4c4 1px 2px,#a8a8a8 2px 3px,#e4e4e4 3px 4px);opacity:.55"></div><div style="left:425px;top:296px;width:43px;height:42px;background:#925868;"></div><div style="left:425px;top:294px;width:37px;height:2px;background:repeating-linear-gradient(90deg,#8c8c8c 0 1px,#c4c4c4 1px 2px,#a8a8a8 2px 3px,#e4e4e4 3px 4px);opacity:.55"></div><div style="left:470px;top:296px;width:43px;height:42px;background:#785464;"></div><div style="left:470px;top:294px;width:37px;height:2px;background:repeating-linear-gradient(90deg,#8c8c8c 0 1px,#c4c4c4 1px 2px,#a8a8a8 2px 3px,#e4e4e4 3px 4px);opacity:.55"></div><div style="left:515px;top:296px;width:42px;height:42px;background:#645064;"></div><div style="left:515px;top:294px;width:37px;height:2px;background:repeating-linear-gradient(90deg,#8c8c8c 0 1px,#c4c4c4 1px 2px,#a8a8a8 2px 3px,#e4e4e4 3px 4px);opacity:.55"></div><div style="left:560px;top:296px;width:42px;height:42px;background:#444c64;"></div><div style="left:560px;top:294px;width:37px;height:2px;background:repeating-linear-gradient(90deg,#8c8c8c 0 1px,#c4c4c4 1px 2px,#a8a8a8 2px 3px,#e4e4e4 3px 4px);opacity:.55"></div><div style="left:605px;top:296px;width:42px;height:42px;background:#1c4664;"></div><div style="left:605px;top:294px;width:37px;height:2px;background:repeating-linear-gradient(90deg,#8c8c8c 0 1px,#c4c4c4 1px 2px,#a8a8a8 2px 3px,#e4e4e4 3px 4px);opacity:.55"></div><div style="left:650px;top:296px;width:42px;height:42px;background:#004464;"></div><div style="left:650px;top:294px;width:37px;height:2px;background:repeating-linear-gradient(90deg,#8c8c8c 0 1px,#c4c4c4 1px 2px,#a8a8a8 2px 3px,#e4e4e4 3px 4px);opacity:.55"></div><div style="left:201px;top:343px;width:43px;height:42px;background:#ff9480;"></div><div style="left:201px;top:341px;width:37px;height:2px;background:repeating-linear-gradient(90deg,#8c8c8c 0 1px,#c4c4c4 1px 2px,#a8a8a8 2px 3px,#e4e4e4 3px 4px);opacity:.55"></div><div style="left:246px;top:343px;width:43px;height:42px;background:#ff9484;"></div><div style="left:246px;top:341px;width:37px;height:2px;background:repeating-linear-gradient(90deg,#8c8c8c 0 1px,#c4c4c4 1px 2px,#a8a8a8 2px 3px,#e4e4e4 3px 4px);opacity:.55"></div><div style="left:291px;top:343px;width:42px;height:42px;background:#ec8c7c;"></div><div style="left:291px;top:341px;width:37px;height:2px;background:repeating-linear-gradient(90deg,#8c8c8c 0 1px,#c4c4c4 1px 2px,#a8a8a8 2px 3px,#e4e4e4 3px 4px);opacity:.55"></div><div style="left:336px;top:343px;width:42px;height:42px;background:#d08078;"></div><div style="left:336px;top:341px;width:37px;height:2px;background:repeating-linear-gradient(90deg,#8c8c8c 0 1px,#c4c4c4 1px 2px,#a8a8a8 2px 3px,#e4e4e4 3px 4px);opacity:.55"></div><div style="left:381px;top:343px;width:42px;height:42px;background:#b07874;"></div><div style="left:381px;top:341px;width:37px;height:2px;background:repeating-linear-gradient(90deg,#8c8c8c 0 1px,#c4c4c4 1px 2px,#a8a8a8 2px 3px,#e4e4e4 3px 4px);opacity:.55"></div><div style="left:425px;top:343px;width:43px;height:42px;background:#927070;"></div><div style="left:425px;top:341px;width:37px;height:2px;background:repeating-linear-gradient(90deg,#8c8c8c 0 1px,#c4c4c4 1px 2px,#a8a8a8 2px 3px,#e4e4e4 3px 4px);opacity:.55"></div><div style="left:470px;top:343px;width:43px;height:42px;background:#786868;"></div><div style="left:470px;top:341px;width:37px;height:2px;background:repeating-linear-gradient(90deg,#8c8c8c 0 1px,#c4c4c4 1px 2px,#a8a8a8 2px 3px,#e4e4e4 3px 4px);opacity:.55"></div><div style="left:515px;top:343px;width:42px;height:42px;background:#60606a;"></div><div style="left:515px;top:341px;width:37px;height:2px;background:repeating-linear-gradient(90deg,#8c8c8c 0 1px,#c4c4c4 1px 2px,#a8a8a8 2px 3px,#e4e4e4 3px 4px);opacity:.55"></div><div style="left:560px;top:343px;width:42px;height:42px;background:#3a586a;"></div><div style="left:560px;top:341px;width:37px;height:2px;background:repeating-linear-gradient(90deg,#8c8c8c 0 1px,#c4c4c4 1px 2px,#a8a8a8 2px 3px,#e4e4e4 3px 4px);opacity:.55"></div><div style="left:605px;top:343px;width:42px;height:42px;background:#10546a;"></div><div style="left:605px;top:341px;width:37px;height:2px;background:repeating-linear-gradient(90deg,#8c8c8c 0 1px,#c4c4c4 1px 2px,#a8a8a8 2px 3px,#e4e4e4 3px 4px);opacity:.55"></div><div style="left:650px;top:343px;width:42px;height:42px;background:#005c78;"></div><div style="left:650px;top:341px;width:37px;height:2px;background:repeating-linear-gradient(90deg,#8c8c8c 0 1px,#c4c4c4 1px 2px,#a8a8a8 2px 3px,#e4e4e4 3px 4px);opacity:.55"></div><div style="left:201px;top:390px;width:43px;height:42px;background:#ffa878;"></div><div style="left:201px;top:388px;width:37px;height:2px;background:repeating-linear-gradient(90deg,#8c8c8c 0 1px,#c4c4c4 1px 2px,#a8a8a8 2px 3px,#e4e4e4 3px 4px);opacity:.55"></div><div style="left:246px;top:390px;width:43px;height:42px;background:#ffa080;"></div><div style="left:246px;top:388px;width:37px;height:2px;background:repeating-linear-gradient(90deg,#8c8c8c 0 1px,#c4c4c4 1px 2px,#a8a8a8 2px 3px,#e4e4e4 3px 4px);opacity:.55"></div><div style="left:291px;top:390px;width:42px;height:42px;background:#e89880;"></div><div style="left:291px;top:388px;width:37px;height:2px;background:repeating-linear-gradient(90deg,#8c8c8c 0 1px,#c4c4c4 1px 2px,#a8a8a8 2px 3px,#e4e4e4 3px 4px);opacity:.55"></div><div style="left:336px;top:390px;width:42px;height:42px;background:#d09080;"></div><div style="left:336px;top:388px;width:37px;height:2px;background:repeating-linear-gradient(90deg,#8c8c8c 0 1px,#c4c4c4 1px 2px,#a8a8a8 2px 3px,#e4e4e4 3px 4px);opacity:.55"></div><div style="left:381px;top:390px;width:42px;height:42px;background:#b08880;"></div><div style="left:381px;top:388px;width:37px;height:2px;background:repeating-linear-gradient(90deg,#8c8c8c 0 1px,#c4c4c4 1px 2px,#a8a8a8 2px 3px,#e4e4e4 3px 4px);opacity:.55"></div><div style="left:425px;top:390px;width:43px;height:42px;background:#988784;"></div><div style="left:425px;top:388px;width:37px;height:2px;background:repeating-linear-gradient(90deg,#8c8c8c 0 1px,#c4c4c4 1px 2px,#a8a8a8 2px 3px,#e4e4e4 3px 4px);opacity:.55"></div><div style="left:470px;top:390px;width:43px;height:42px;background:#787470;"></div><div style="left:470px;top:388px;width:37px;height:2px;background:repeating-linear-gradient(90deg,#8c8c8c 0 1px,#c4c4c4 1px 2px,#a8a8a8 2px 3px,#e4e4e4 3px 4px);opacity:.55"></div><div style="left:515px;top:390px;width:42px;height:42px;background:#586a70;"></div><div style="left:515px;top:388px;width:37px;height:2px;background:repeating-linear-gradient(90deg,#8c8c8c 0 1px,#c4c4c4 1px 2px,#a8a8a8 2px 3px,#e4e4e4 3px 4px);opacity:.55"></div><div style="left:560px;top:390px;width:42px;height:42px;background:#306c78;"></div><div style="left:560px;top:388px;width:37px;height:2px;background:repeating-linear-gradient(90deg,#8c8c8c 0 1px,#c4c4c4 1px 2px,#a8a8a8 2px 3px,#e4e4e4 3px 4px);opacity:.55"></div><div style="left:605px;top:390px;width:42px;height:42px;background:#006878;"></div><div style="left:605px;top:388px;width:37px;height:2px;background:repeating-linear-gradient(90deg,#8c8c8c 0 1px,#c4c4c4 1px 2px,#a8a8a8 2px 3px,#e4e4e4 3px 4px);opacity:.55"></div><div style="left:650px;top:390px;width:42px;height:42px;background:#006478;"></div><div style="left:650px;top:388px;width:37px;height:2px;background:repeating-linear-gradient(90deg,#8c8c8c 0 1px,#c4c4c4 1px 2px,#a8a8a8 2px 3px,#e4e4e4 3px 4px);opacity:.55"></div><div style="left:201px;top:437px;width:43px;height:42px;background:#ffb880;"></div><div style="left:201px;top:435px;width:37px;height:2px;background:repeating-linear-gradient(90deg,#8c8c8c 0 1px,#c4c4c4 1px 2px,#a8a8a8 2px 3px,#e4e4e4 3px 4px);opacity:.55"></div><div style="left:246px;top:437px;width:43px;height:42px;background:#ffb484;"></div><div style="left:246px;top:435px;width:37px;height:2px;background:repeating-linear-gradient(90deg,#8c8c8c 0 1px,#c4c4c4 1px 2px,#a8a8a8 2px 3px,#e4e4e4 3px 4px);opacity:.55"></div><div style="left:291px;top:437px;width:42px;height:42px;background:#e8a880;"></div><div style="left:291px;top:435px;width:37px;height:2px;background:repeating-linear-gradient(90deg,#8c8c8c 0 1px,#c4c4c4 1px 2px,#a8a8a8 2px 3px,#e4e4e4 3px 4px);opacity:.55"></div><div style="left:336px;top:437px;width:42px;height:42px;background:#d4a488;"></div><div style="left:336px;top:435px;width:37px;height:2px;background:repeating-linear-gradient(90deg,#8c8c8c 0 1px,#c4c4c4 1px 2px,#a8a8a8 2px 3px,#e4e4e4 3px 4px);opacity:.55"></div><div style="left:381px;top:437px;width:42px;height:42px;background:#b49c88;"></div><div style="left:381px;top:435px;width:37px;height:2px;background:repeating-linear-gradient(90deg,#8c8c8c 0 1px,#c4c4c4 1px 2px,#a8a8a8 2px 3px,#e4e4e4 3px 4px);opacity:.55"></div><div style="left:425px;top:437px;width:43px;height:42px;background:#9a9080;"></div><div style="left:425px;top:435px;width:37px;height:2px;background:repeating-linear-gradient(90deg,#8c8c8c 0 1px,#c4c4c4 1px 2px,#a8a8a8 2px 3px,#e4e4e4 3px 4px);opacity:.55"></div><div style="left:470px;top:437px;width:43px;height:42px;background:#788878;"></div><div style="left:470px;top:435px;width:37px;height:2px;background:repeating-linear-gradient(90deg,#8c8c8c 0 1px,#c4c4c4 1px 2px,#a8a8a8 2px 3px,#e4e4e4 3px 4px);opacity:.55"></div><div style="left:515px;top:437px;width:42px;height:42px;background:#528480;"></div><div style="left:515px;top:435px;width:37px;height:2px;background:repeating-linear-gradient(90deg,#8c8c8c 0 1px,#c4c4c4 1px 2px,#a8a8a8 2px 3px,#e4e4e4 3px 4px);opacity:.55"></div><div style="left:560px;top:437px;width:42px;height:42px;background:#1e8080;"></div><div style="left:560px;top:435px;width:37px;height:2px;background:repeating-linear-gradient(90deg,#8c8c8c 0 1px,#c4c4c4 1px 2px,#a8a8a8 2px 3px,#e4e4e4 3px 4px);opacity:.55"></div><div style="left:605px;top:437px;width:42px;height:42px;background:#00788a;"></div><div style="left:605px;top:435px;width:37px;height:2px;background:repeating-linear-gradient(90deg,#8c8c8c 0 1px,#c4c4c4 1px 2px,#a8a8a8 2px 3px,#e4e4e4 3px 4px);opacity:.55"></div><div style="left:650px;top:437px;width:42px;height:42px;background:#007488;"></div><div style="left:650px;top:435px;width:37px;height:2px;background:repeating-linear-gradient(90deg,#8c8c8c 0 1px,#c4c4c4 1px 2px,#a8a8a8 2px 3px,#e4e4e4 3px 4px);opacity:.55"></div><div style="left:201px;top:484px;width:43px;height:43px;background:#ffd088;"></div><div style="left:201px;top:482px;width:37px;height:2px;background:repeating-linear-gradient(90deg,#8c8c8c 0 1px,#c4c4c4 1px 2px,#a8a8a8 2px 3px,#e4e4e4 3px 4px);opacity:.55"></div><div style="left:246px;top:484px;width:43px;height:43px;background:#ffc888;"></div><div style="left:246px;top:482px;width:37px;height:2px;background:repeating-linear-gradient(90deg,#8c8c8c 0 1px,#c4c4c4 1px 2px,#a8a8a8 2px 3px,#e4e4e4 3px 4px);opacity:.55"></div><div style="left:291px;top:484px;width:42px;height:43px;background:#eac088;"></div><div style="left:291px;top:482px;width:37px;height:2px;background:repeating-linear-gradient(90deg,#8c8c8c 0 1px,#c4c4c4 1px 2px,#a8a8a8 2px 3px,#e4e4e4 3px 4px);opacity:.55"></div><div style="left:336px;top:484px;width:42px;height:43px;background:#d4b88c;"></div><div style="left:336px;top:482px;width:37px;height:2px;background:repeating-linear-gradient(90deg,#8c8c8c 0 1px,#c4c4c4 1px 2px,#a8a8a8 2px 3px,#e4e4e4 3px 4px);opacity:.55"></div><div style="left:381px;top:484px;width:42px;height:43px;background:#b8b08c;"></div><div style="left:381px;top:482px;width:37px;height:2px;background:repeating-linear-gradient(90deg,#8c8c8c 0 1px,#c4c4c4 1px 2px,#a8a8a8 2px 3px,#e4e4e4 3px 4px);opacity:.55"></div><div style="left:425px;top:484px;width:43px;height:43px;background:#98a888;"></div><div style="left:425px;top:482px;width:37px;height:2px;background:repeating-linear-gradient(90deg,#8c8c8c 0 1px,#c4c4c4 1px 2px,#a8a8a8 2px 3px,#e4e4e4 3px 4px);opacity:.55"></div><div style="left:470px;top:484px;width:43px;height:43px;background:#78a08c;"></div><div style="left:470px;top:482px;width:37px;height:2px;background:repeating-linear-gradient(90deg,#8c8c8c 0 1px,#c4c4c4 1px 2px,#a8a8a8 2px 3px,#e4e4e4 3px 4px);opacity:.55"></div><div style="left:515px;top:484px;width:42px;height:43px;background:#509c8c;"></div><div style="left:515px;top:482px;width:37px;height:2px;background:repeating-linear-gradient(90deg,#8c8c8c 0 1px,#c4c4c4 1px 2px,#a8a8a8 2px 3px,#e4e4e4 3px 4px);opacity:.55"></div><div style="left:560px;top:484px;width:42px;height:43px;background:#009490;"></div><div style="left:560px;top:482px;width:37px;height:2px;background:repeating-linear-gradient(90deg,#8c8c8c 0 1px,#c4c4c4 1px 2px,#a8a8a8 2px 3px,#e4e4e4 3px 4px);opacity:.55"></div><div style="left:605px;top:484px;width:42px;height:43px;background:#009094;"></div><div style="left:605px;top:482px;width:37px;height:2px;background:repeating-linear-gradient(90deg,#8c8c8c 0 1px,#c4c4c4 1px 2px,#a8a8a8 2px 3px,#e4e4e4 3px 4px);opacity:.55"></div><div style="left:650px;top:484px;width:42px;height:43px;background:#008890;"></div><div style="left:650px;top:482px;width:37px;height:2px;background:repeating-linear-gradient(90deg,#8c8c8c 0 1px,#c4c4c4 1px 2px,#a8a8a8 2px 3px,#e4e4e4 3px 4px);opacity:.55"></div><div style="left:201px;top:531px;width:43px;height:43px;background:#ffe090;"></div><div style="left:201px;top:529px;width:37px;height:2px;background:repeating-linear-gradient(90deg,#8c8c8c 0 1px,#c4c4c4 1px 2px,#a8a8a8 2px 3px,#e4e4e4 3px 4px);opacity:.55"></div><div style="left:246px;top:531px;width:43px;height:43px;background:#ffdc8c;"></div><div style="left:246px;top:529px;width:37px;height:2px;background:repeating-linear-gradient(90deg,#8c8c8c 0 1px,#c4c4c4 1px 2px,#a8a8a8 2px 3px,#e4e4e4 3px 4px);opacity:.55"></div><div style="left:291px;top:531px;width:42px;height:43px;background:#e8d48c;"></div><div style="left:291px;top:529px;width:37px;height:2px;background:repeating-linear-gradient(90deg,#8c8c8c 0 1px,#c4c4c4 1px 2px,#a8a8a8 2px 3px,#e4e4e4 3px 4px);opacity:.55"></div><div style="left:336px;top:531px;width:42px;height:43px;background:#d4cc90;"></div><div style="left:336px;top:529px;width:37px;height:2px;background:repeating-linear-gradient(90deg,#8c8c8c 0 1px,#c4c4c4 1px 2px,#a8a8a8 2px 3px,#e4e4e4 3px 4px);opacity:.55"></div><div style="left:381px;top:531px;width:42px;height:43px;background:#b8c494;"></div><div style="left:381px;top:529px;width:37px;height:2px;background:repeating-linear-gradient(90deg,#8c8c8c 0 1px,#c4c4c4 1px 2px,#a8a8a8 2px 3px,#e4e4e4 3px 4px);opacity:.55"></div><div style="left:425px;top:531px;width:43px;height:43px;background:#98c094;"></div><div style="left:425px;top:529px;width:37px;height:2px;background:repeating-linear-gradient(90deg,#8c8c8c 0 1px,#c4c4c4 1px 2px,#a8a8a8 2px 3px,#e4e4e4 3px 4px);opacity:.55"></div><div style="left:470px;top:531px;width:43px;height:43px;background:#74bc98;"></div><div style="left:470px;top:529px;width:37px;height:2px;background:repeating-linear-gradient(90deg,#8c8c8c 0 1px,#c4c4c4 1px 2px,#a8a8a8 2px 3px,#e4e4e4 3px 4px);opacity:.55"></div><div style="left:515px;top:531px;width:42px;height:43px;background:#40b4a0;"></div><div style="left:515px;top:529px;width:37px;height:2px;background:repeating-linear-gradient(90deg,#8c8c8c 0 1px,#c4c4c4 1px 2px,#a8a8a8 2px 3px,#e4e4e4 3px 4px);opacity:.55"></div><div style="left:560px;top:531px;width:42px;height:43px;background:#00aca0;"></div><div style="left:560px;top:529px;width:37px;height:2px;background:repeating-linear-gradient(90deg,#8c8c8c 0 1px,#c4c4c4 1px 2px,#a8a8a8 2px 3px,#e4e4e4 3px 4px);opacity:.55"></div><div style="left:605px;top:531px;width:42px;height:43px;background:#00a4a0;"></div><div style="left:605px;top:529px;width:37px;height:2px;background:repeating-linear-gradient(90deg,#8c8c8c 0 1px,#c4c4c4 1px 2px,#a8a8a8 2px 3px,#e4e4e4 3px 4px);opacity:.55"></div><div style="left:650px;top:531px;width:42px;height:43px;background:#009ca0;"></div><div style="left:650px;top:529px;width:37px;height:2px;background:repeating-linear-gradient(90deg,#8c8c8c 0 1px,#c4c4c4 1px 2px,#a8a8a8 2px 3px,#e4e4e4 3px 4px);opacity:.55"></div><div style="left:201px;top:578px;width:43px;height:43px;background:#ffe880;"></div><div style="left:201px;top:576px;width:37px;height:2px;background:repeating-linear-gradient(90deg,#8c8c8c 0 1px,#c4c4c4 1px 2px,#a8a8a8 2px 3px,#e4e4e4 3px 4px);opacity:.55"></div><div style="left:246px;top:578px;width:43px;height:43px;background:#fce484;"></div><div style="left:246px;top:576px;width:37px;height:2px;background:repeating-linear-gradient(90deg,#8c8c8c 0 1px,#c4c4c4 1px 2px,#a8a8a8 2px 3px,#e4e4e4 3px 4px);opacity:.55"></div><div style="left:291px;top:578px;width:42px;height:43px;background:#ece08c;"></div><div style="left:291px;top:576px;width:37px;height:2px;background:repeating-linear-gradient(90deg,#8c8c8c 0 1px,#c4c4c4 1px 2px,#a8a8a8 2px 3px,#e4e4e4 3px 4px);opacity:.55"></div><div style="left:336px;top:578px;width:42px;height:43px;background:#d8e094;"></div><div style="left:336px;top:576px;width:37px;height:2px;background:repeating-linear-gradient(90deg,#8c8c8c 0 1px,#c4c4c4 1px 2px,#a8a8a8 2px 3px,#e4e4e4 3px 4px);opacity:.55"></div><div style="left:381px;top:578px;width:42px;height:43px;background:#b8d894;"></div><div style="left:381px;top:576px;width:37px;height:2px;background:repeating-linear-gradient(90deg,#8c8c8c 0 1px,#c4c4c4 1px 2px,#a8a8a8 2px 3px,#e4e4e4 3px 4px);opacity:.55"></div><div style="left:425px;top:578px;width:43px;height:43px;background:#90d494;"></div><div style="left:425px;top:576px;width:37px;height:2px;background:repeating-linear-gradient(90deg,#8c8c8c 0 1px,#c4c4c4 1px 2px,#a8a8a8 2px 3px,#e4e4e4 3px 4px);opacity:.55"></div><div style="left:470px;top:578px;width:43px;height:43px;background:#70d4a4;"></div><div style="left:470px;top:576px;width:37px;height:2px;background:repeating-linear-gradient(90deg,#8c8c8c 0 1px,#c4c4c4 1px 2px,#a8a8a8 2px 3px,#e4e4e4 3px 4px);opacity:.55"></div><div style="left:515px;top:578px;width:42px;height:43px;background:#2ccca8;"></div><div style="left:515px;top:576px;width:37px;height:2px;background:repeating-linear-gradient(90deg,#8c8c8c 0 1px,#c4c4c4 1px 2px,#a8a8a8 2px 3px,#e4e4e4 3px 4px);opacity:.55"></div><div style="left:560px;top:578px;width:42px;height:43px;background:#00c4b0;"></div><div style="left:560px;top:576px;width:37px;height:2px;background:repeating-linear-gradient(90deg,#8c8c8c 0 1px,#c4c4c4 1px 2px,#a8a8a8 2px 3px,#e4e4e4 3px 4px);opacity:.55"></div><div style="left:605px;top:578px;width:42px;height:43px;background:#00b8ac;"></div><div style="left:605px;top:576px;width:37px;height:2px;background:repeating-linear-gradient(90deg,#8c8c8c 0 1px,#c4c4c4 1px 2px,#a8a8a8 2px 3px,#e4e4e4 3px 4px);opacity:.55"></div><div style="left:650px;top:578px;width:42px;height:43px;background:#00aca8;"></div><div style="left:650px;top:576px;width:37px;height:2px;background:repeating-linear-gradient(90deg,#8c8c8c 0 1px,#c4c4c4 1px 2px,#a8a8a8 2px 3px,#e4e4e4 3px 4px);opacity:.55"></div><div style="left:201px;top:625px;width:43px;height:43px;background:#fff888;"></div><div style="left:201px;top:623px;width:37px;height:2px;background:repeating-linear-gradient(90deg,#8c8c8c 0 1px,#c4c4c4 1px 2px,#a8a8a8 2px 3px,#e4e4e4 3px 4px);opacity:.55"></div><div style="left:246px;top:625px;width:43px;height:43px;background:#fefc88;"></div><div style="left:246px;top:623px;width:37px;height:2px;background:repeating-linear-gradient(90deg,#8c8c8c 0 1px,#c4c4c4 1px 2px,#a8a8a8 2px 3px,#e4e4e4 3px 4px);opacity:.55"></div><div style="left:291px;top:625px;width:42px;height:43px;background:#f0fc94;"></div><div style="left:291px;top:623px;width:37px;height:2px;background:repeating-linear-gradient(90deg,#8c8c8c 0 1px,#c4c4c4 1px 2px,#a8a8a8 2px 3px,#e4e4e4 3px 4px);opacity:.55"></div><div style="left:336px;top:625px;width:42px;height:43px;background:#d8fc94;"></div><div style="left:336px;top:623px;width:37px;height:2px;background:repeating-linear-gradient(90deg,#8c8c8c 0 1px,#c4c4c4 1px 2px,#a8a8a8 2px 3px,#e4e4e4 3px 4px);opacity:.55"></div><div style="left:381px;top:625px;width:42px;height:43px;background:#b8fc94;"></div><div style="left:381px;top:623px;width:37px;height:2px;background:repeating-linear-gradient(90deg,#8c8c8c 0 1px,#c4c4c4 1px 2px,#a8a8a8 2px 3px,#e4e4e4 3px 4px);opacity:.55"></div><div style="left:425px;top:625px;width:43px;height:43px;background:#90f89c;"></div><div style="left:425px;top:623px;width:37px;height:2px;background:repeating-linear-gradient(90deg,#8c8c8c 0 1px,#c4c4c4 1px 2px,#a8a8a8 2px 3px,#e4e4e4 3px 4px);opacity:.55"></div><div style="left:470px;top:625px;width:43px;height:43px;background:#70f0b4;"></div><div style="left:470px;top:623px;width:37px;height:2px;background:repeating-linear-gradient(90deg,#8c8c8c 0 1px,#c4c4c4 1px 2px,#a8a8a8 2px 3px,#e4e4e4 3px 4px);opacity:.55"></div><div style="left:515px;top:625px;width:42px;height:43px;background:#24e8bc;"></div><div style="left:515px;top:623px;width:37px;height:2px;background:repeating-linear-gradient(90deg,#8c8c8c 0 1px,#c4c4c4 1px 2px,#a8a8a8 2px 3px,#e4e4e4 3px 4px);opacity:.55"></div><div style="left:560px;top:625px;width:42px;height:43px;background:#00dcc0;"></div><div style="left:560px;top:623px;width:37px;height:2px;background:repeating-linear-gradient(90deg,#8c8c8c 0 1px,#c4c4c4 1px 2px,#a8a8a8 2px 3px,#e4e4e4 3px 4px);opacity:.55"></div><div style="left:605px;top:625px;width:42px;height:43px;background:#00ccb8;"></div><div style="left:605px;top:623px;width:37px;height:2px;background:repeating-linear-gradient(90deg,#8c8c8c 0 1px,#c4c4c4 1px 2px,#a8a8a8 2px 3px,#e4e4e4 3px 4px);opacity:.55"></div><div style="left:650px;top:625px;width:42px;height:43px;background:#00bcb0;"></div><div style="left:650px;top:623px;width:37px;height:2px;background:repeating-linear-gradient(90deg,#8c8c8c 0 1px,#c4c4c4 1px 2px,#a8a8a8 2px 3px,#e4e4e4 3px 4px);opacity:.55"></div><div style="left:366px;top:141px;font-family:'Liberation Serif',serif;font-size:7.2px;line-height:8px;color:#222;white-space:nowrap;">CMYK Color Chart : CMY Chart sample (&nbsp; 6/ 11 page)</div><div style="left:244px;top:34px;width:1px;height:700px;background:#ff0000;"></div><svg style="position:absolute;left:426px;top:393px" width="40" height="40" viewBox="880 620 40 40"><polygon points="900.5,625.3 888.2,649.8 912.8,649.8" fill="#000"/><polygon points="900.5,631.2 892.5,647.1 908.5,647.1" fill="#fff"/><text x="900.6" y="646.2" font-family="Liberation Serif" font-size="13" text-anchor="middle" fill="#000">1</text></svg></div>
<svg style="position:absolute;left:457px;top:900px" width="9" height="10"><path d="M6.5 1 L2.5 4.5 L6.5 8" fill="none" stroke="#bdbdbd" stroke-width="2"/></svg>
<svg style="position:absolute;left:1132px;top:900px" width="9" height="10"><path d="M2 1 L6 4.5 L2 8" fill="none" stroke="#bdbdbd" stroke-width="2"/></svg>
<div style="left:88px;top:28px;width:1044px;height:34px;border:3px solid #d81c14;box-shadow:0 0 0 2px #fff, inset 0 0 0 2px #fff;"></div>
<div style="left:89px;top:74px;width:304px;height:444px;border:3px solid #d81c14;box-shadow:0 0 0 2px #fff, inset 0 0 0 2px #fff;"></div>
<div style="left:90px;top:528px;width:304px;height:414px;border:3px solid #d81c14;box-shadow:0 0 0 2px #fff, inset 0 0 0 2px #fff;"></div>
<div style="left:404px;top:117px;width:744px;height:48px;border:3px solid #d81c14;box-shadow:0 0 0 2px #fff, inset 0 0 0 2px #fff;"></div>
<div style="left:404px;top:186px;width:744px;height:724px;border:3px solid #d81c14;box-shadow:0 0 0 2px #fff, inset 0 0 0 2px #fff;"></div>
<div style="left:404px;top:919px;width:194px;height:34px;border:3px solid #d81c14;box-shadow:0 0 0 2px #fff, inset 0 0 0 2px #fff;"></div>
<div style="left:31px;top:41px;width:57px;height:7px;background:#fff;"></div>
<div style="left:31px;top:43px;width:57px;height:3px;background:#d81c14;"></div>
<div style="left:33px;top:159px;width:56px;height:7px;background:#fff;"></div>
<div style="left:33px;top:161px;width:56px;height:3px;background:#d81c14;"></div>
<div style="left:34px;top:601px;width:56px;height:7px;background:#fff;"></div>
<div style="left:34px;top:603px;width:56px;height:3px;background:#d81c14;"></div>
<div style="left:807px;top:94px;width:430px;height:8px;background:#fff;"></div>
<div style="left:807px;top:95px;width:430px;height:3px;background:#d81c14;"></div>
<div style="left:1154px;top:529px;width:79px;height:7px;background:#fff;"></div>
<div style="left:1154px;top:531px;width:79px;height:3px;background:#d81c14;"></div>
<div style="left:1154px;top:143px;width:78px;height:7px;background:#fff;"></div>
<div style="left:1154px;top:145px;width:78px;height:3px;background:#d81c14;"></div>
<div style="left:607px;top:938px;width:628px;height:7px;background:#fff;"></div>
<div style="left:607px;top:940px;width:628px;height:3px;background:#d81c14;"></div>
<svg style="position:absolute;left:17.5px;top:37px;overflow:visible" width="12" height="19" viewBox="0 0 12 19"><path d="M4.8 18 V0.6 M5.2 0.9 C4 2.6 2.6 3.3 0.4 3.5" fill="none" stroke="#000" stroke-width="2.3" stroke-linejoin="miter" stroke-linecap="butt"/></svg>
<svg style="position:absolute;left:16px;top:152px;overflow:visible" width="12" height="19" viewBox="0 0 12 19"><path d="M1.2 5.2 C1.2 2.4 2.7 1.1 5 1.1 C7.4 1.1 8.8 2.6 8.8 5.1 C8.8 7.4 7.6 9 6 11 L1.3 16.9 L10 16.9" fill="none" stroke="#000" stroke-width="2.3" stroke-linejoin="miter" stroke-linecap="butt"/></svg>
<svg style="position:absolute;left:18px;top:594.5px;overflow:visible" width="12" height="19" viewBox="0 0 12 19"><path d="M1.2 5 C1.4 2.3 2.9 1.1 5 1.1 C7.2 1.1 8.6 2.6 8.6 4.9 C8.6 7.2 7.1 8.6 4.6 8.6 C7.6 8.6 9 10.4 9 13 C9 15.7 7.3 17 5 17 C2.5 17 1.2 15.6 0.9 13" fill="none" stroke="#000" stroke-width="2.3" stroke-linejoin="miter" stroke-linecap="butt"/></svg>
<svg style="position:absolute;left:1246px;top:88px;overflow:visible" width="12" height="19" viewBox="0 0 12 19"><path d="M7 18 V1.1 H6.6 L1.1 12.6 H10" fill="none" stroke="#000" stroke-width="2.3" stroke-linejoin="miter" stroke-linecap="butt"/></svg>
<svg style="position:absolute;left:1246px;top:524.5px;overflow:visible" width="12" height="19" viewBox="0 0 12 19"><path d="M9.4 1.1 H1.9 L1.3 9.1 C2.1 7.5 3.4 6.9 5 6.9 C7.6 6.9 9.1 8.8 9.1 12 C9.1 15.2 7.4 17 5 17 C2.7 17 1.3 15.6 1 13.2" fill="none" stroke="#000" stroke-width="2.3" stroke-linejoin="miter" stroke-linecap="butt"/></svg>
<svg style="position:absolute;left:1246.5px;top:138.3px;overflow:visible" width="12" height="19" viewBox="0 0 12 19"><path d="M8.3 3.5 C7.9 1.9 6.9 1.1 5.3 1.1 C2.5 1.1 1.1 4.3 1.1 9.6 C1.1 14.6 2.5 17 5 17 C7.4 17 8.6 14.8 8.6 12 C8.6 9.2 7.3 7.4 5 7.4 C3.1 7.4 1.7 8.6 1.2 10.6" fill="none" stroke="#000" stroke-width="2.3" stroke-linejoin="miter" stroke-linecap="butt"/></svg>
<svg style="position:absolute;left:1245.5px;top:930.8px;overflow:visible" width="12" height="19" viewBox="0 0 12 19"><path d="M0.4 1.1 H8.7 C7 6 5.2 12 3.3 18" fill="none" stroke="#000" stroke-width="2.3" stroke-linejoin="miter" stroke-linecap="butt"/></svg>
</body></html>
